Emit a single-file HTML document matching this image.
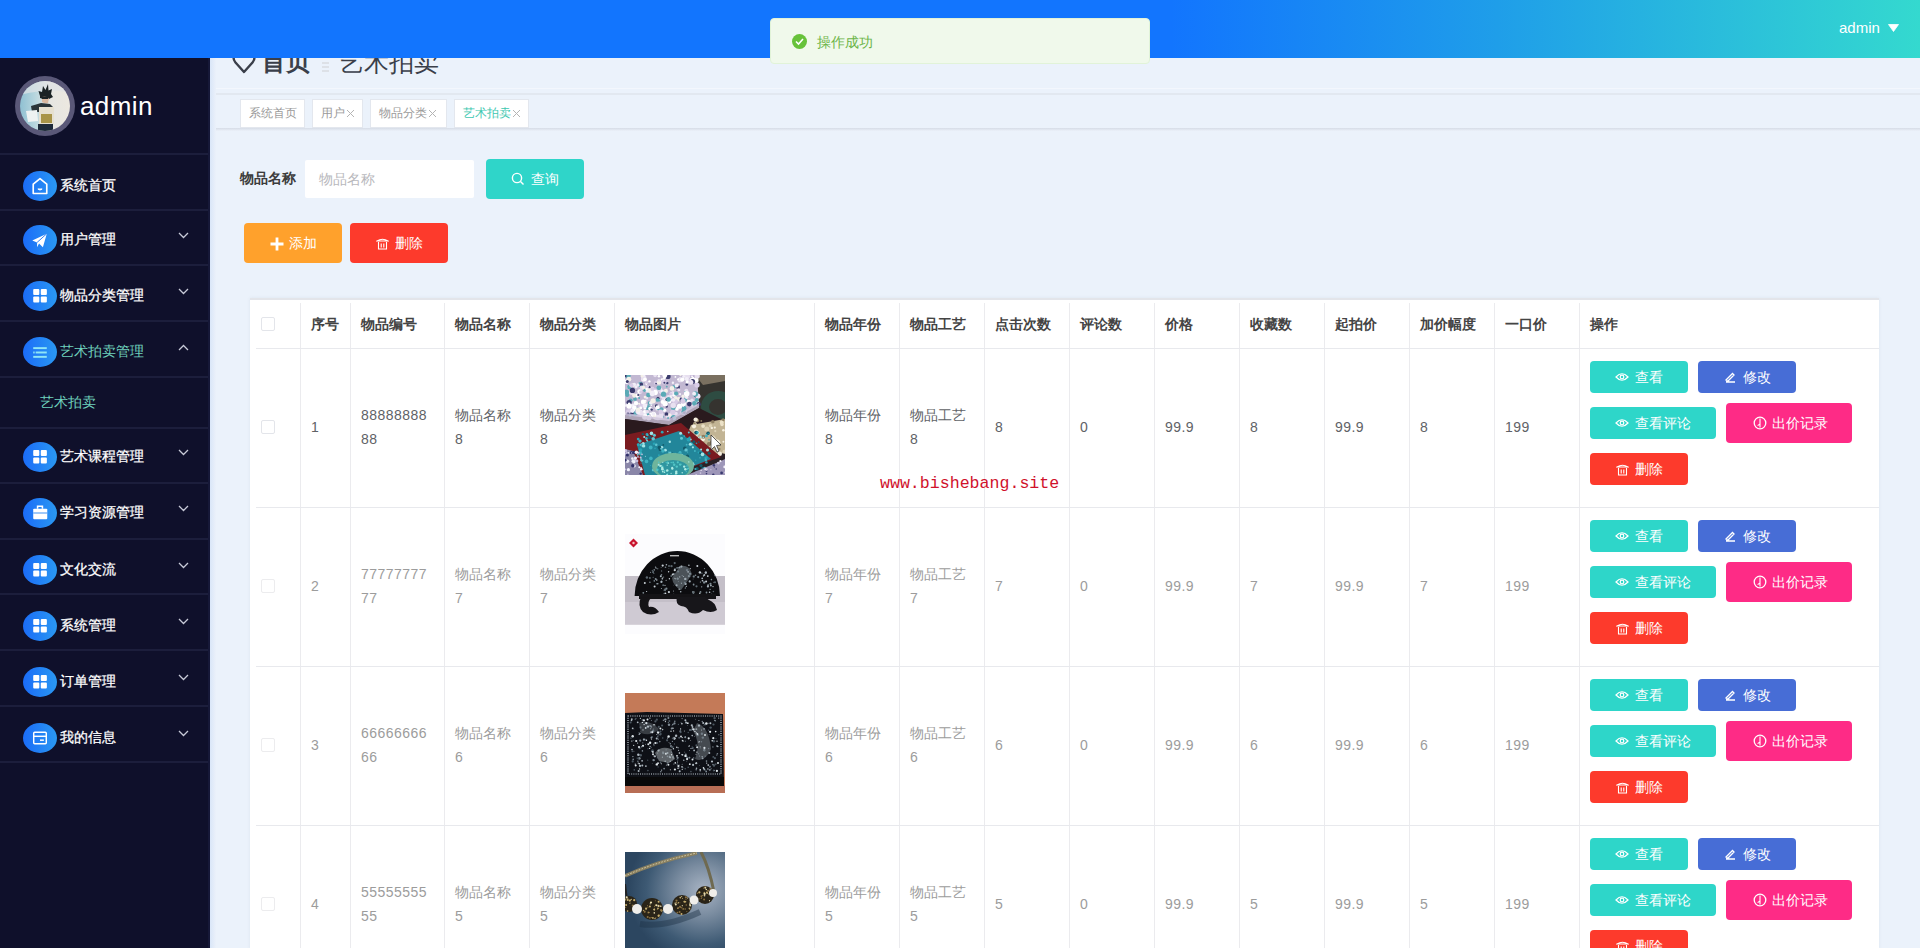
<!DOCTYPE html><html><head><meta charset="utf-8"><style>
*{box-sizing:border-box;margin:0;padding:0}
html,body{width:1920px;height:948px;overflow:hidden;background:#ebf2fb;font-family:"Liberation Sans",sans-serif;position:relative}
.a{position:absolute}
#hdr{left:0;top:0;width:1920px;height:58px;background:linear-gradient(90deg,#1275fe 0%,#1275fe 61%,#1f9ee9 78%,#34d9cf 100%);z-index:5}
#side{left:0;top:58px;width:210px;height:890px;background:#0f102b;z-index:3;overflow:hidden}
.hl{position:absolute;left:0;width:210px;height:2px;background:#1c1e3c}
.ic{position:absolute;left:23px;width:34px;height:30px;border-radius:50%;background:linear-gradient(90deg,#1b6cf8,#2a98f2)}
.ic svg{position:absolute;left:0;top:0}
.mt{position:absolute;left:60px;font-size:14px;color:#fff;line-height:16px;white-space:nowrap;-webkit-text-stroke:0.25px currentColor}
.chev{position:absolute;left:178px}
.tag{position:absolute;top:99px;height:29px;background:#fff;border:1px solid #e3e7ee;font-size:12px;color:#999;line-height:27px;padding-left:8px;white-space:nowrap}
.btn{position:absolute;border-radius:4px;color:#fff;font-size:14px;line-height:16px;text-align:center;white-space:nowrap}
.btn svg{display:inline-block;vertical-align:-2px;margin-right:6px}
.vl{position:absolute;width:1px;background:#ebebee}
.hz{position:absolute;height:1px;background:#ebeef5}
.th{position:absolute;top:316px;font-size:14px;font-weight:bold;color:#444;line-height:16px;white-space:nowrap}
.td{position:absolute;font-size:14px;line-height:24px;color:#606266;white-space:nowrap}
.fd{color:#9c9c9c}
.n{letter-spacing:.45px}
.cb{position:absolute;left:261px;width:14px;height:14px;border:1px solid #e3e5ea;border-radius:2px;background:#fff}
</style></head><body>
<div id="hdr" class="a">
<div class="a" style="left:1839px;top:19px;font-size:15px;color:#fff;line-height:18px">admin</div>
<svg class="a" style="left:1888px;top:24px" width="11" height="8" viewBox="0 0 11 8"><path d="M0.5 0.5H10.5L5.5 7.5Z" fill="#fff" stroke="#fff" stroke-width="0.8" stroke-linejoin="round"/></svg>
</div>
<div id="side" class="a">
<div class="a" style="left:15px;top:18px;width:60px;height:60px;border-radius:50%;background:#5a5878;">
<div class="a" style="left:5px;top:5px;width:50px;height:50px;border-radius:50%;overflow:hidden;background:linear-gradient(90deg,#8fc0d2 0%,#b8d6de 30%,#e6e6e2 60%,#ece8e0 100%)">
<svg width="50" height="50" viewBox="0 0 50 50" style="filter:blur(0.35px)">
<path d="M0 0H50V12Q30 6 0 14Z" fill="#dfe3e6" opacity="0.7"/>
<path d="M20 15 L18.5 10 L22 11 L23 5 L25.5 9 L28 3 L28.5 9.5 L32 8 L31 13 L33 16 L29 18 L23 18 L20 17Z" fill="#1a2224"/>
<path d="M22 16 Q26 15 29 17 L28 22 Q25 23 22 21Z" fill="#d9b8a0"/>
<path d="M22 16 L29 16 L28 18 L22 18Z" fill="#1a2224"/>
<path d="M11 25 L21 22 L30 23 L34 27 L34 31 L12 31Z" fill="#2a3438"/>
<path d="M19 26 L34 26 L34 43 L19 43Z" fill="#e6e0d0"/>
<path d="M21 33 L32 33 L32 42 L21 42Z" fill="#a89448"/>
<path d="M6 30 L17 29 L18 40 L8 41Z" fill="#eef2f2"/>
<path d="M18 43 L33 43 L33 50 L18 50Z" fill="#1e2a3a"/>
</svg></div></div>
<div class="a" style="left:80px;top:33px;font-size:26px;letter-spacing:0.4px;color:#fff;line-height:30px">admin</div>
<div class="hl" style="top:95px"></div>
<div class="hl" style="top:151px"></div>
<div class="hl" style="top:206px"></div>
<div class="hl" style="top:262px"></div>
<div class="hl" style="top:318px"></div>
<div class="hl" style="top:369px"></div>
<div class="hl" style="top:424px"></div>
<div class="hl" style="top:480px"></div>
<div class="hl" style="top:535px"></div>
<div class="hl" style="top:591px"></div>
<div class="hl" style="top:647px"></div>
<div class="hl" style="top:703px"></div>
<div class="ic" style="top:113px"><svg width="34" height="30" viewBox="0 0 34 31"><path d="M10 13.5 L17 7.8 L24 13.5 V23.2 H10Z" fill="none" stroke="#fff" stroke-width="1.7" stroke-linejoin="round"/><path d="M14.8 18.6 Q17 20.8 19.2 18.6Z" fill="#fff" stroke="#fff" stroke-width="1"/></svg></div>
<div class="mt" style="top:119px;color:#fff">系统首页</div>
<div class="ic" style="top:167px"><svg width="34" height="30" viewBox="0 0 34 31"><path d="M9 16 L24 9 L20 23 L16 19 L14 23 L14 18Z" fill="#fff"/><path d="M14 18 L24 9" stroke="#2a7cf3" stroke-width="1"/></svg></div>
<div class="mt" style="top:173px;color:#fff">用户管理</div>
<svg class="chev" style="top:174px" width="11" height="7" viewBox="0 0 11 7"><path d="M1 1 L5.5 5.5 L10 1" fill="none" stroke="#c8cad8" stroke-width="1.3"/></svg>
<div class="ic" style="top:223px"><svg width="34" height="30" viewBox="0 0 34 31"><rect x="10" y="8.2" width="6.3" height="6.3" rx="1" fill="#fff"/><rect x="17.8" y="8.2" width="6.3" height="6.3" rx="1" fill="#fff"/><rect x="10" y="16" width="6.3" height="6.3" rx="1" fill="#fff"/><rect x="17.8" y="16" width="6.3" height="6.3" rx="1" fill="#fff"/></svg></div>
<div class="mt" style="top:229px;color:#fff">物品分类管理</div>
<svg class="chev" style="top:230px" width="11" height="7" viewBox="0 0 11 7"><path d="M1 1 L5.5 5.5 L10 1" fill="none" stroke="#c8cad8" stroke-width="1.3"/></svg>
<div class="ic" style="top:279px"><svg width="34" height="30" viewBox="0 0 34 31"><rect x="10" y="10.5" width="14" height="2" fill="#8fe6f6"/><rect x="10" y="15" width="1.5" height="2" fill="#8fe6f6"/><rect x="12.5" y="15" width="11.5" height="2" fill="#8fe6f6"/><rect x="10" y="19.5" width="14" height="2" fill="#8fe6f6"/></svg></div>
<div class="mt" style="top:285px;color:#6fd3bd;-webkit-text-stroke:0">艺术拍卖管理</div>
<svg class="chev" style="top:286px" width="11" height="7" viewBox="0 0 11 7"><path d="M1 6 L5.5 1.5 L10 6" fill="none" stroke="#c8cad8" stroke-width="1.3"/></svg>
<div class="ic" style="top:384px"><svg width="34" height="30" viewBox="0 0 34 31"><rect x="10" y="8.2" width="6.3" height="6.3" rx="1" fill="#fff"/><rect x="17.8" y="8.2" width="6.3" height="6.3" rx="1" fill="#fff"/><rect x="10" y="16" width="6.3" height="6.3" rx="1" fill="#fff"/><rect x="17.8" y="16" width="6.3" height="6.3" rx="1" fill="#fff"/></svg></div>
<div class="mt" style="top:390px;color:#fff">艺术课程管理</div>
<svg class="chev" style="top:391px" width="11" height="7" viewBox="0 0 11 7"><path d="M1 1 L5.5 5.5 L10 1" fill="none" stroke="#c8cad8" stroke-width="1.3"/></svg>
<div class="ic" style="top:440px"><svg width="34" height="30" viewBox="0 0 34 31"><path d="M14.5 11V8.5H19.5V11" fill="none" stroke="#fff" stroke-width="1.6"/><rect x="10" y="11" width="14.5" height="11" rx="1" fill="#fff"/><rect x="10" y="15" width="14.5" height="1" fill="#3a8ef0"/></svg></div>
<div class="mt" style="top:446px;color:#fff">学习资源管理</div>
<svg class="chev" style="top:447px" width="11" height="7" viewBox="0 0 11 7"><path d="M1 1 L5.5 5.5 L10 1" fill="none" stroke="#c8cad8" stroke-width="1.3"/></svg>
<div class="ic" style="top:497px"><svg width="34" height="30" viewBox="0 0 34 31"><rect x="10" y="8.2" width="6.3" height="6.3" rx="1" fill="#fff"/><rect x="17.8" y="8.2" width="6.3" height="6.3" rx="1" fill="#fff"/><rect x="10" y="16" width="6.3" height="6.3" rx="1" fill="#fff"/><rect x="17.8" y="16" width="6.3" height="6.3" rx="1" fill="#fff"/></svg></div>
<div class="mt" style="top:503px;color:#fff">文化交流</div>
<svg class="chev" style="top:504px" width="11" height="7" viewBox="0 0 11 7"><path d="M1 1 L5.5 5.5 L10 1" fill="none" stroke="#c8cad8" stroke-width="1.3"/></svg>
<div class="ic" style="top:553px"><svg width="34" height="30" viewBox="0 0 34 31"><rect x="10" y="8.2" width="6.3" height="6.3" rx="1" fill="#fff"/><rect x="17.8" y="8.2" width="6.3" height="6.3" rx="1" fill="#fff"/><rect x="10" y="16" width="6.3" height="6.3" rx="1" fill="#fff"/><rect x="17.8" y="16" width="6.3" height="6.3" rx="1" fill="#fff"/></svg></div>
<div class="mt" style="top:559px;color:#fff">系统管理</div>
<svg class="chev" style="top:560px" width="11" height="7" viewBox="0 0 11 7"><path d="M1 1 L5.5 5.5 L10 1" fill="none" stroke="#c8cad8" stroke-width="1.3"/></svg>
<div class="ic" style="top:609px"><svg width="34" height="30" viewBox="0 0 34 31"><rect x="10" y="8.2" width="6.3" height="6.3" rx="1" fill="#fff"/><rect x="17.8" y="8.2" width="6.3" height="6.3" rx="1" fill="#fff"/><rect x="10" y="16" width="6.3" height="6.3" rx="1" fill="#fff"/><rect x="17.8" y="16" width="6.3" height="6.3" rx="1" fill="#fff"/></svg></div>
<div class="mt" style="top:615px;color:#fff">订单管理</div>
<svg class="chev" style="top:616px" width="11" height="7" viewBox="0 0 11 7"><path d="M1 1 L5.5 5.5 L10 1" fill="none" stroke="#c8cad8" stroke-width="1.3"/></svg>
<div class="ic" style="top:665px"><svg width="34" height="30" viewBox="0 0 34 31"><rect x="10.5" y="9.5" width="13" height="12" rx="1" fill="none" stroke="#fff" stroke-width="1.5"/><rect x="10.5" y="13" width="13" height="1.5" fill="#fff"/><rect x="17" y="17" width="4" height="1.5" fill="#fff"/></svg></div>
<div class="mt" style="top:671px;color:#fff">我的信息</div>
<svg class="chev" style="top:672px" width="11" height="7" viewBox="0 0 11 7"><path d="M1 1 L5.5 5.5 L10 1" fill="none" stroke="#c8cad8" stroke-width="1.3"/></svg>
<div class="mt" style="left:40px;top:336px;color:#6fd3bd;-webkit-text-stroke:0">艺术拍卖</div>
<div class="a" style="left:208px;top:0;width:2px;height:890px;background:#161838"></div>
</div>
<div class="a" style="left:210px;top:58px;width:6px;height:890px;background:linear-gradient(90deg,#d9e6f8,#ebf1fa)"></div>
<svg class="a" style="left:232px;top:50px" width="24" height="24" viewBox="0 0 24 24"><path d="M12 22 L3.5 12.5 Q1.5 10 1.5 7.5 Q1.5 2.5 6.5 2.5 Q10 2.5 12 6 Q14 2.5 17.5 2.5 Q22.5 2.5 22.5 7.5 Q22.5 10 20.5 12.5Z" fill="none" stroke="#3a3f4a" stroke-width="2.4" stroke-linejoin="round"/></svg>
<div class="a" style="left:261px;top:46px;font-size:25px;font-weight:bold;color:#3a3f4a;line-height:30px">首页</div>
<div class="a" style="left:322px;top:62px;width:7px;height:2px;background:#dde1e7"></div><div class="a" style="left:322px;top:66px;width:7px;height:2px;background:#dde1e7"></div><div class="a" style="left:322px;top:70px;width:7px;height:2px;background:#dde1e7"></div>
<div class="a" style="left:339px;top:47px;font-size:25px;color:#3a3f4a;line-height:30px">艺术拍卖</div>
<div class="a" style="left:216px;top:88px;width:1704px;height:1px;background:#f3f7fd"></div>
<div class="a" style="left:216px;top:93px;width:1704px;height:2px;background:#e2e8f0"></div>
<div class="a" style="left:216px;top:128px;width:1704px;height:3px;background:linear-gradient(#d6dce6,#ebf1fa)"></div>
<div class="tag" style="left:240px;width:65px;color:#9a9a9a">系统首页</div>
<div class="tag" style="left:312px;width:51px;color:#9a9a9a">用户<svg style="vertical-align:-1px;margin-left:1px" width="9" height="9" viewBox="0 0 9 9"><path d="M1 1L8 8M8 1L1 8" stroke="#b4b4b4" stroke-width="1"/></svg></div>
<div class="tag" style="left:370px;width:77px;color:#9a9a9a">物品分类<svg style="vertical-align:-1px;margin-left:1px" width="9" height="9" viewBox="0 0 9 9"><path d="M1 1L8 8M8 1L1 8" stroke="#b4b4b4" stroke-width="1"/></svg></div>
<div class="tag" style="left:454px;width:75px;color:#3dc7b0">艺术拍卖<svg style="vertical-align:-1px;margin-left:1px" width="9" height="9" viewBox="0 0 9 9"><path d="M1 1L8 8M8 1L1 8" stroke="#b4b4b4" stroke-width="1"/></svg></div>
<div class="a" style="left:240px;top:170px;font-size:14px;font-weight:bold;color:#3c3c3c;line-height:16px">物品名称</div>
<div class="a" style="left:305px;top:160px;width:169px;height:38px;background:#fff;border-radius:2px"></div>
<div class="a" style="left:319px;top:171px;font-size:14px;color:#b8b8bc;line-height:16px">物品名称</div>
<div class="btn" style="left:486px;top:159px;width:98px;height:40px;background:#2fd5c9;padding-top:12px"><svg width="14" height="14" viewBox="0 0 14 14"><circle cx="6" cy="6" r="4.6" fill="none" stroke="#fff" stroke-width="1.4"/><path d="M9.5 9.5L12.5 12.5" stroke="#fff" stroke-width="1.4"/></svg>查询</div>
<div class="btn" style="left:244px;top:223px;width:98px;height:40px;background:#ffa12c;padding-top:12px"><svg style="margin-right:5px;vertical-align:-2.5px" width="14" height="14" viewBox="0 0 14 14"><path d="M7 0.5V13.5M0.5 7H13.5" stroke="#fff" stroke-width="2.8"/></svg>添加</div>
<div class="btn" style="left:350px;top:223px;width:98px;height:40px;background:#fd3a2c;padding-top:12px"><svg width="13" height="13" viewBox="0 0 13 13"><path d="M1 4Q6.5 0.5 12 4Z" fill="none" stroke="#fff" stroke-width="1.1"/><path d="M2.5 5V12H10.5V5M5.2 6.5V10.5M7.8 6.5V10.5" fill="none" stroke="#fff" stroke-width="1.1"/></svg>删除</div>
<div class="a" style="left:250px;top:298px;width:1629px;height:651px;background:#fff;border-top:2px solid #e3e5ea;box-shadow:0 0 3px rgba(120,130,150,0.12)"></div>
<div class="vl" style="left:300px;top:303px;height:650px"></div>
<div class="vl" style="left:350px;top:303px;height:650px"></div>
<div class="vl" style="left:444px;top:303px;height:650px"></div>
<div class="vl" style="left:529px;top:303px;height:650px"></div>
<div class="vl" style="left:614px;top:303px;height:650px"></div>
<div class="vl" style="left:814px;top:303px;height:650px"></div>
<div class="vl" style="left:899px;top:303px;height:650px"></div>
<div class="vl" style="left:984px;top:303px;height:650px"></div>
<div class="vl" style="left:1069px;top:303px;height:650px"></div>
<div class="vl" style="left:1154px;top:303px;height:650px"></div>
<div class="vl" style="left:1239px;top:303px;height:650px"></div>
<div class="vl" style="left:1324px;top:303px;height:650px"></div>
<div class="vl" style="left:1409px;top:303px;height:650px"></div>
<div class="vl" style="left:1494px;top:303px;height:650px"></div>
<div class="vl" style="left:1579px;top:303px;height:650px"></div>
<div class="hz" style="left:256px;top:348px;width:1623px;background:#e8e9ed"></div>
<div class="hz" style="left:256px;top:507px;width:1623px;background:#e8e9ed"></div>
<div class="hz" style="left:256px;top:666px;width:1623px;background:#e8e9ed"></div>
<div class="hz" style="left:256px;top:825px;width:1623px;background:#e8e9ed"></div>
<div class="cb" style="top:317px"></div>
<div class="th" style="left:311px">序号</div>
<div class="th" style="left:361px">物品编号</div>
<div class="th" style="left:455px">物品名称</div>
<div class="th" style="left:540px">物品分类</div>
<div class="th" style="left:625px">物品图片</div>
<div class="th" style="left:825px">物品年份</div>
<div class="th" style="left:910px">物品工艺</div>
<div class="th" style="left:995px">点击次数</div>
<div class="th" style="left:1080px">评论数</div>
<div class="th" style="left:1165px">价格</div>
<div class="th" style="left:1250px">收藏数</div>
<div class="th" style="left:1335px">起拍价</div>
<div class="th" style="left:1420px">加价幅度</div>
<div class="th" style="left:1505px">一口价</div>
<div class="th" style="left:1590px">操作</div>
<div class="cb" style="top:420px"></div>
<div class="td n" style="left:311px;top:415px">1</div>
<div class="td n" style="left:361px;top:403px">88888888<br>88</div>
<div class="td" style="left:455px;top:403px">物品名称<br>8</div>
<div class="td" style="left:540px;top:403px">物品分类<br>8</div>
<div class="td" style="left:825px;top:403px">物品年份<br>8</div>
<div class="td" style="left:910px;top:403px">物品工艺<br>8</div>
<div class="td n" style="left:995px;top:415px">8</div>
<div class="td n" style="left:1080px;top:415px">0</div>
<div class="td n" style="left:1165px;top:415px">99.9</div>
<div class="td n" style="left:1250px;top:415px">8</div>
<div class="td n" style="left:1335px;top:415px">99.9</div>
<div class="td n" style="left:1420px;top:415px">8</div>
<div class="td n" style="left:1505px;top:415px">199</div>
<div class="a" style="left:625px;top:375px;width:100px;height:100px;overflow:hidden"><svg width="100" height="100" viewBox="0 0 100 100"><rect width="100" height="100" fill="#2b2126"/><rect x="70" y="0" width="30" height="50" fill="#35332f"/><path d="M70 0H100V6L78 10Z" fill="#7a7060"/><ellipse cx="93" cy="32" rx="13" ry="12" fill="none" stroke="#2e4c42" stroke-width="8"/><path d="M0 0H72L74 30L44 46L0 40Z" fill="#c2b8d2"/><circle cx="9.9" cy="39.0" r="2.3" fill="#5aaab6"/><circle cx="8.7" cy="35.0" r="1.7" fill="#e8e0f0"/><circle cx="58.4" cy="4.3" r="0.8" fill="#e8e0f0"/><circle cx="32.0" cy="35.1" r="0.7" fill="#f4f0e8"/><circle cx="19.7" cy="36.9" r="1.9" fill="#ffffff"/><circle cx="66.7" cy="1.4" r="0.8" fill="#f2eef8"/><circle cx="69.5" cy="17.5" r="1.2" fill="#e8e0f0"/><circle cx="53.7" cy="24.3" r="2.3" fill="#f4f0e8"/><circle cx="40.9" cy="15.9" r="2.1" fill="#f4f0e8"/><circle cx="30.8" cy="42.1" r="2.6" fill="#ffffff"/><circle cx="63.6" cy="5.6" r="1.4" fill="#e8e0f0"/><circle cx="37.6" cy="41.9" r="1.1" fill="#5aaab6"/><circle cx="43.5" cy="40.6" r="2.5" fill="#e8e0f0"/><circle cx="43.6" cy="1.6" r="1.2" fill="#e8e0f0"/><circle cx="30.7" cy="8.0" r="1.9" fill="#d8cce6"/><circle cx="6.4" cy="30.5" r="0.9" fill="#ffffff"/><circle cx="38.5" cy="18.1" r="1.7" fill="#f2eef8"/><circle cx="34.7" cy="14.2" r="2.5" fill="#e8e0f0"/><circle cx="47.9" cy="7.8" r="1.2" fill="#f2eef8"/><circle cx="57.0" cy="24.8" r="2.5" fill="#3a3a6c"/><circle cx="29.9" cy="15.8" r="2.5" fill="#d8cce6"/><circle cx="34.0" cy="12.4" r="1.9" fill="#f2eef8"/><circle cx="28.4" cy="39.4" r="2.7" fill="#ffffff"/><circle cx="38.4" cy="25.8" r="1.6" fill="#f2eef8"/><circle cx="35.6" cy="16.8" r="1.9" fill="#e8e0f0"/><circle cx="35.9" cy="16.4" r="1.4" fill="#d8cce6"/><circle cx="33.9" cy="1.3" r="1.2" fill="#ffffff"/><circle cx="40.8" cy="8.3" r="0.9" fill="#5aaab6"/><circle cx="5.2" cy="39.9" r="1.7" fill="#5aaab6"/><circle cx="18.5" cy="5.0" r="2.0" fill="#d8cce6"/><circle cx="21.5" cy="7.7" r="1.2" fill="#ffffff"/><circle cx="48.6" cy="29.8" r="1.3" fill="#d8cce6"/><circle cx="36.7" cy="5.3" r="1.4" fill="#d8cce6"/><circle cx="31.1" cy="8.6" r="0.9" fill="#3a3a6c"/><circle cx="71.5" cy="19.9" r="2.7" fill="#3a3a6c"/><circle cx="1.3" cy="6.7" r="2.2" fill="#ffffff"/><circle cx="33.0" cy="23.3" r="1.6" fill="#3a3a6c"/><circle cx="72.3" cy="29.0" r="2.2" fill="#f4f0e8"/><circle cx="16.5" cy="29.8" r="1.5" fill="#d8cce6"/><circle cx="48.8" cy="19.6" r="2.2" fill="#ffffff"/><circle cx="22.7" cy="39.5" r="1.4" fill="#5aaab6"/><circle cx="55.0" cy="19.1" r="1.2" fill="#f2eef8"/><circle cx="41.5" cy="39.1" r="1.9" fill="#3a3a6c"/><circle cx="71.2" cy="26.2" r="1.1" fill="#f2eef8"/><circle cx="28.0" cy="16.0" r="1.1" fill="#e8e0f0"/><circle cx="43.8" cy="22.6" r="2.7" fill="#e8e0f0"/><circle cx="21.9" cy="23.0" r="1.4" fill="#e8e0f0"/><circle cx="66.6" cy="0.8" r="1.1" fill="#d8cce6"/><circle cx="60.0" cy="25.9" r="1.0" fill="#e8e0f0"/><circle cx="15.8" cy="31.0" r="2.5" fill="#d8cce6"/><circle cx="39.5" cy="35.3" r="1.8" fill="#ffffff"/><circle cx="53.7" cy="3.9" r="1.1" fill="#3a3a6c"/><circle cx="19.8" cy="15.3" r="1.8" fill="#5aaab6"/><circle cx="27.2" cy="15.7" r="1.3" fill="#f4f0e8"/><circle cx="10.0" cy="25.4" r="0.9" fill="#f2eef8"/><circle cx="30.1" cy="17.5" r="2.8" fill="#ffffff"/><circle cx="61.3" cy="15.7" r="2.0" fill="#e8e0f0"/><circle cx="5.7" cy="25.3" r="1.9" fill="#5aaab6"/><circle cx="27.0" cy="13.6" r="1.8" fill="#ffffff"/><circle cx="33.9" cy="12.8" r="2.4" fill="#5aaab6"/><circle cx="0.9" cy="30.8" r="0.9" fill="#ffffff"/><circle cx="61.1" cy="36.3" r="1.1" fill="#e8e0f0"/><circle cx="12.0" cy="20.7" r="2.1" fill="#ffffff"/><circle cx="55.1" cy="4.7" r="2.6" fill="#e8e0f0"/><circle cx="59.7" cy="25.0" r="2.4" fill="#5aaab6"/><circle cx="52.7" cy="14.5" r="1.1" fill="#d8cce6"/><circle cx="2.9" cy="0.5" r="2.8" fill="#5aaab6"/><circle cx="53.8" cy="14.7" r="1.5" fill="#e8e0f0"/><circle cx="8.2" cy="9.9" r="2.0" fill="#f4f0e8"/><circle cx="49.0" cy="11.9" r="1.8" fill="#5aaab6"/><circle cx="14.7" cy="16.6" r="2.4" fill="#ffffff"/><circle cx="72.8" cy="20.6" r="2.1" fill="#d8cce6"/><circle cx="69.6" cy="18.0" r="1.3" fill="#d8cce6"/><circle cx="13.8" cy="36.5" r="1.9" fill="#5aaab6"/><circle cx="18.2" cy="4.6" r="2.0" fill="#ffffff"/><circle cx="18.1" cy="0.9" r="1.2" fill="#ffffff"/><circle cx="19.8" cy="39.9" r="2.2" fill="#f2eef8"/><circle cx="47.0" cy="13.4" r="2.4" fill="#f4f0e8"/><circle cx="34.7" cy="39.5" r="0.9" fill="#d8cce6"/><circle cx="12.8" cy="35.7" r="2.8" fill="#d8cce6"/><circle cx="22.6" cy="32.6" r="2.5" fill="#5aaab6"/><circle cx="9.3" cy="9.5" r="1.8" fill="#f2eef8"/><circle cx="57.7" cy="37.8" r="2.0" fill="#3a3a6c"/><circle cx="13.2" cy="19.9" r="1.0" fill="#3a3a6c"/><circle cx="18.7" cy="3.0" r="2.7" fill="#e8e0f0"/><circle cx="40.6" cy="24.9" r="2.5" fill="#f4f0e8"/><circle cx="0.8" cy="38.5" r="1.1" fill="#f4f0e8"/><circle cx="1.8" cy="29.7" r="1.6" fill="#f2eef8"/><circle cx="4.6" cy="16.3" r="1.0" fill="#ffffff"/><circle cx="20.5" cy="25.9" r="1.1" fill="#ffffff"/><circle cx="17.3" cy="0.3" r="1.8" fill="#f4f0e8"/><circle cx="68.8" cy="29.4" r="1.2" fill="#d8cce6"/><circle cx="36.6" cy="22.0" r="1.2" fill="#e8e0f0"/><circle cx="24.9" cy="28.1" r="2.2" fill="#5aaab6"/><circle cx="72.0" cy="10.1" r="2.6" fill="#d8cce6"/><circle cx="11.8" cy="35.2" r="2.6" fill="#5aaab6"/><circle cx="22.1" cy="13.8" r="1.9" fill="#ffffff"/><circle cx="51.9" cy="33.9" r="1.9" fill="#ffffff"/><circle cx="42.3" cy="8.1" r="1.2" fill="#3a3a6c"/><circle cx="57.9" cy="22.8" r="1.5" fill="#d8cce6"/><circle cx="28.4" cy="38.9" r="1.8" fill="#f2eef8"/><circle cx="38.8" cy="4.2" r="1.2" fill="#ffffff"/><circle cx="19.8" cy="42.0" r="2.7" fill="#ffffff"/><circle cx="71.7" cy="28.4" r="2.7" fill="#ffffff"/><circle cx="32.9" cy="42.5" r="2.7" fill="#e8e0f0"/><circle cx="29.4" cy="41.9" r="1.6" fill="#f4f0e8"/><circle cx="71.0" cy="5.5" r="2.0" fill="#e8e0f0"/><circle cx="67.3" cy="30.4" r="1.3" fill="#e8e0f0"/><circle cx="55.5" cy="0.2" r="1.1" fill="#f4f0e8"/><circle cx="42.9" cy="1.4" r="2.7" fill="#3a3a6c"/><circle cx="61.8" cy="9.5" r="1.3" fill="#3a3a6c"/><circle cx="20.2" cy="26.9" r="1.2" fill="#f4f0e8"/><circle cx="58.5" cy="37.2" r="2.7" fill="#d8cce6"/><circle cx="36.3" cy="39.4" r="2.3" fill="#e8e0f0"/><circle cx="15.2" cy="37.3" r="2.6" fill="#f2eef8"/><circle cx="8.7" cy="34.4" r="1.8" fill="#ffffff"/><circle cx="5.6" cy="17.2" r="2.4" fill="#e8e0f0"/><circle cx="37.2" cy="16.4" r="1.8" fill="#f2eef8"/><circle cx="9.2" cy="33.0" r="1.4" fill="#e8e0f0"/><circle cx="25.1" cy="33.6" r="1.9" fill="#ffffff"/><circle cx="47.9" cy="17.4" r="1.1" fill="#f2eef8"/><circle cx="73.6" cy="29.2" r="2.2" fill="#3a3a6c"/><circle cx="73.0" cy="21.2" r="2.5" fill="#e8e0f0"/><circle cx="33.3" cy="30.8" r="1.1" fill="#f2eef8"/><circle cx="50.2" cy="26.6" r="2.7" fill="#d8cce6"/><circle cx="63.7" cy="26.9" r="2.2" fill="#ffffff"/><circle cx="36.5" cy="34.3" r="2.0" fill="#5aaab6"/><circle cx="46.6" cy="18.7" r="2.0" fill="#e8e0f0"/><circle cx="56.8" cy="37.5" r="2.0" fill="#d8cce6"/><circle cx="30.4" cy="31.5" r="1.3" fill="#f4f0e8"/><circle cx="61.6" cy="22.3" r="1.7" fill="#f2eef8"/><circle cx="20.0" cy="4.5" r="1.9" fill="#ffffff"/><circle cx="26.3" cy="30.2" r="0.7" fill="#ffffff"/><circle cx="51.1" cy="18.5" r="2.1" fill="#5aaab6"/><circle cx="15.5" cy="9.6" r="2.6" fill="#5aaab6"/><circle cx="5.1" cy="32.2" r="2.6" fill="#d8cce6"/><circle cx="34.6" cy="25.7" r="0.8" fill="#5aaab6"/><circle cx="48.3" cy="32.8" r="2.4" fill="#5aaab6"/><circle cx="26.3" cy="34.0" r="1.5" fill="#e8e0f0"/><circle cx="12.8" cy="36.3" r="2.5" fill="#d8cce6"/><circle cx="53.0" cy="11.9" r="2.0" fill="#3a3a6c"/><circle cx="62.4" cy="1.4" r="2.6" fill="#e8e0f0"/><circle cx="23.4" cy="19.9" r="2.3" fill="#5aaab6"/><circle cx="14.1" cy="28.8" r="1.0" fill="#f4f0e8"/><circle cx="43.0" cy="42.9" r="1.0" fill="#5aaab6"/><circle cx="34.0" cy="7.5" r="2.3" fill="#f4f0e8"/><circle cx="26.7" cy="34.6" r="1.2" fill="#3a3a6c"/><circle cx="53.2" cy="14.1" r="0.9" fill="#e8e0f0"/><circle cx="23.8" cy="42.7" r="2.7" fill="#f2eef8"/><circle cx="4.1" cy="27.5" r="2.6" fill="#3a3a6c"/><circle cx="50.6" cy="22.7" r="1.8" fill="#f4f0e8"/><circle cx="25.3" cy="38.5" r="0.9" fill="#ffffff"/><circle cx="7.0" cy="18.4" r="1.7" fill="#e8e0f0"/><circle cx="17.4" cy="13.0" r="1.8" fill="#e8e0f0"/><circle cx="15.7" cy="32.9" r="1.4" fill="#ffffff"/><circle cx="3.4" cy="36.7" r="2.5" fill="#d8cce6"/><circle cx="21.3" cy="9.0" r="1.0" fill="#ffffff"/><circle cx="58.7" cy="1.4" r="1.5" fill="#f2eef8"/><circle cx="41.8" cy="11.7" r="0.9" fill="#5aaab6"/><circle cx="67.1" cy="1.6" r="0.8" fill="#ffffff"/><circle cx="3.2" cy="12.6" r="0.9" fill="#ffffff"/><circle cx="14.1" cy="23.0" r="1.0" fill="#5aaab6"/><circle cx="50.8" cy="38.9" r="2.1" fill="#e8e0f0"/><circle cx="24.4" cy="12.3" r="1.2" fill="#3a3a6c"/><circle cx="18.2" cy="27.0" r="2.4" fill="#ffffff"/><circle cx="25.9" cy="27.8" r="1.9" fill="#f2eef8"/><circle cx="67.0" cy="25.2" r="1.8" fill="#e8e0f0"/><circle cx="68.1" cy="3.2" r="1.3" fill="#ffffff"/><circle cx="3.9" cy="4.2" r="2.4" fill="#f4f0e8"/><circle cx="37.1" cy="4.6" r="1.4" fill="#ffffff"/><circle cx="39.3" cy="20.4" r="1.0" fill="#e8e0f0"/><circle cx="33.0" cy="33.9" r="1.3" fill="#5aaab6"/><circle cx="59.2" cy="3.9" r="0.8" fill="#e8e0f0"/><circle cx="4.3" cy="12.0" r="2.2" fill="#5aaab6"/><circle cx="58.8" cy="37.1" r="2.5" fill="#5aaab6"/><circle cx="7.0" cy="38.7" r="1.8" fill="#3a3a6c"/><circle cx="24.4" cy="15.6" r="2.3" fill="#f4f0e8"/><circle cx="7.7" cy="30.0" r="1.6" fill="#f2eef8"/><circle cx="21.6" cy="7.2" r="1.5" fill="#d8cce6"/><circle cx="7.2" cy="15.9" r="1.9" fill="#f2eef8"/><circle cx="22.2" cy="36.8" r="1.8" fill="#e8e0f0"/><circle cx="22.1" cy="16.2" r="1.4" fill="#f2eef8"/><circle cx="38.9" cy="6.8" r="2.6" fill="#d8cce6"/><circle cx="58.1" cy="26.4" r="1.6" fill="#5aaab6"/><circle cx="35.5" cy="42.0" r="2.6" fill="#e8e0f0"/><circle cx="10.0" cy="24.1" r="1.9" fill="#5aaab6"/><circle cx="58.0" cy="32.3" r="2.3" fill="#d8cce6"/><circle cx="27.4" cy="14.1" r="2.0" fill="#d8cce6"/><circle cx="39.4" cy="7.7" r="1.0" fill="#3a3a6c"/><circle cx="41.6" cy="41.7" r="1.1" fill="#e8e0f0"/><circle cx="69.5" cy="28.5" r="2.4" fill="#5aaab6"/><circle cx="52.9" cy="9.4" r="0.8" fill="#ffffff"/><circle cx="16.1" cy="38.6" r="1.8" fill="#e8e0f0"/><circle cx="1.6" cy="16.9" r="2.5" fill="#5aaab6"/><circle cx="16.3" cy="9.2" r="1.7" fill="#3a3a6c"/><circle cx="31.5" cy="31.1" r="1.8" fill="#3a3a6c"/><circle cx="59.1" cy="33.4" r="2.4" fill="#5aaab6"/><circle cx="30.1" cy="0.4" r="1.8" fill="#e8e0f0"/><circle cx="38.1" cy="22.4" r="1.5" fill="#e8e0f0"/><circle cx="3.0" cy="39.2" r="1.7" fill="#3a3a6c"/><circle cx="47.5" cy="24.9" r="2.4" fill="#d8cce6"/><circle cx="71.8" cy="25.0" r="1.9" fill="#5aaab6"/><circle cx="38.9" cy="24.9" r="2.4" fill="#e8e0f0"/><circle cx="44.6" cy="26.7" r="1.7" fill="#ffffff"/><circle cx="37.5" cy="27.0" r="1.9" fill="#ffffff"/><circle cx="18.7" cy="0.4" r="1.6" fill="#f2eef8"/><circle cx="27.3" cy="18.5" r="2.7" fill="#f2eef8"/><circle cx="62.6" cy="17.6" r="1.7" fill="#d8cce6"/><circle cx="47.1" cy="39.2" r="2.3" fill="#e8e0f0"/><circle cx="33.8" cy="5.4" r="1.4" fill="#e8e0f0"/><circle cx="60.2" cy="16.9" r="1.0" fill="#5aaab6"/><circle cx="70.3" cy="19.0" r="2.7" fill="#5aaab6"/><circle cx="54.7" cy="31.8" r="1.6" fill="#f4f0e8"/><circle cx="15.9" cy="38.2" r="2.7" fill="#e8e0f0"/><circle cx="53.0" cy="4.2" r="1.0" fill="#ffffff"/><circle cx="17.0" cy="1.2" r="1.2" fill="#f4f0e8"/><circle cx="57.3" cy="4.6" r="2.1" fill="#ffffff"/><circle cx="61.7" cy="4.1" r="2.0" fill="#f2eef8"/><circle cx="40.7" cy="24.6" r="1.4" fill="#ffffff"/><circle cx="54.4" cy="31.2" r="2.5" fill="#ffffff"/><circle cx="13.2" cy="37.0" r="2.2" fill="#f2eef8"/><circle cx="58.2" cy="31.1" r="0.9" fill="#e8e0f0"/><circle cx="9.2" cy="20.6" r="2.1" fill="#f4f0e8"/><circle cx="67.0" cy="5.3" r="2.5" fill="#ffffff"/><circle cx="11.0" cy="28.2" r="2.2" fill="#ffffff"/><circle cx="38.5" cy="19.2" r="2.6" fill="#5aaab6"/><circle cx="64.3" cy="29.1" r="2.4" fill="#3a3a6c"/><circle cx="58.4" cy="28.7" r="2.5" fill="#ffffff"/><circle cx="48.6" cy="42.6" r="2.7" fill="#5aaab6"/><circle cx="4.2" cy="28.8" r="1.3" fill="#ffffff"/><circle cx="16.9" cy="12.6" r="2.2" fill="#e8e0f0"/><circle cx="11.0" cy="11.8" r="1.6" fill="#f2eef8"/><circle cx="39.4" cy="28.0" r="1.0" fill="#e8e0f0"/><circle cx="20.0" cy="22.1" r="1.3" fill="#f4f0e8"/><circle cx="15.9" cy="16.9" r="1.7" fill="#d8cce6"/><circle cx="13.0" cy="34.9" r="2.3" fill="#f4f0e8"/><circle cx="39.6" cy="2.7" r="1.4" fill="#ffffff"/><circle cx="47.7" cy="37.3" r="2.6" fill="#d8cce6"/><circle cx="46.1" cy="22.1" r="0.9" fill="#ffffff"/><circle cx="51.7" cy="10.4" r="2.0" fill="#f2eef8"/><circle cx="41.7" cy="31.5" r="1.2" fill="#3a3a6c"/><circle cx="37.2" cy="30.4" r="1.3" fill="#d8cce6"/><circle cx="0.3" cy="0.9" r="1.3" fill="#3a3a6c"/><circle cx="6.3" cy="10.3" r="2.1" fill="#d8cce6"/><circle cx="19.9" cy="33.1" r="1.5" fill="#ffffff"/><circle cx="24.4" cy="6.4" r="1.2" fill="#ffffff"/><circle cx="50.4" cy="1.9" r="0.9" fill="#ffffff"/><circle cx="22.2" cy="11.5" r="1.8" fill="#d8cce6"/><circle cx="2.3" cy="6.4" r="1.5" fill="#3a3a6c"/><circle cx="6.9" cy="15.1" r="0.7" fill="#d8cce6"/><circle cx="71.0" cy="5.2" r="2.6" fill="#ffffff"/><circle cx="44.9" cy="40.0" r="1.6" fill="#f4f0e8"/><circle cx="41.8" cy="24.6" r="1.5" fill="#3a3a6c"/><circle cx="46.8" cy="25.3" r="0.8" fill="#ffffff"/><circle cx="13.0" cy="9.9" r="1.6" fill="#f2eef8"/><circle cx="18.5" cy="12.5" r="1.8" fill="#f4f0e8"/><circle cx="9.3" cy="32.6" r="2.3" fill="#ffffff"/><circle cx="48.4" cy="25.0" r="1.8" fill="#f2eef8"/><circle cx="45.8" cy="20.5" r="1.0" fill="#ffffff"/><circle cx="67.6" cy="6.5" r="2.5" fill="#3a3a6c"/><circle cx="35.8" cy="36.8" r="2.3" fill="#d8cce6"/><circle cx="65.8" cy="7.3" r="2.5" fill="#e8e0f0"/><circle cx="61.7" cy="18.7" r="2.8" fill="#ffffff"/><circle cx="20.0" cy="30.7" r="2.4" fill="#f2eef8"/><circle cx="39.8" cy="0.4" r="2.4" fill="#ffffff"/><circle cx="28.1" cy="25.8" r="2.6" fill="#f4f0e8"/><circle cx="2.2" cy="19.9" r="2.1" fill="#5aaab6"/><circle cx="69.1" cy="18.8" r="2.0" fill="#f2eef8"/><circle cx="7.3" cy="35.8" r="2.1" fill="#f2eef8"/><circle cx="43.5" cy="24.4" r="2.3" fill="#5aaab6"/><circle cx="57.9" cy="26.1" r="2.7" fill="#d8cce6"/><circle cx="59.4" cy="37.7" r="1.2" fill="#3a3a6c"/><circle cx="64.5" cy="5.4" r="0.8" fill="#d8cce6"/><circle cx="31.3" cy="33.5" r="1.2" fill="#f2eef8"/><circle cx="45.7" cy="19.1" r="1.5" fill="#d8cce6"/><circle cx="32.6" cy="32.2" r="2.0" fill="#ffffff"/><circle cx="4.1" cy="31.0" r="2.6" fill="#ffffff"/><circle cx="40.2" cy="28.8" r="2.6" fill="#ffffff"/><circle cx="72.2" cy="1.0" r="2.6" fill="#e8e0f0"/><circle cx="46.7" cy="43.8" r="1.5" fill="#3a3a6c"/><circle cx="7.4" cy="15.4" r="2.7" fill="#3a3a6c"/><circle cx="58.1" cy="21.2" r="1.7" fill="#f4f0e8"/><circle cx="48.2" cy="30.5" r="2.7" fill="#e8e0f0"/><circle cx="32.6" cy="24.9" r="1.9" fill="#5aaab6"/><circle cx="62.1" cy="6.9" r="1.5" fill="#ffffff"/><path d="M0 38L44 44L74 28V33L44 50L0 44Z" fill="#cfc6dc" opacity="0.8"/><path d="M0 44L44 50L74 33L100 46V56L0 62Z" fill="#2a1a1e"/><path d="M66 50L100 44V78L84 80L62 60Z" fill="#c2b494"/><circle cx="92.8" cy="67.5" r="2.5" fill="#f6f0e0"/><circle cx="91.6" cy="68.0" r="2.2" fill="#ddd2b6"/><circle cx="97.0" cy="49.6" r="1.7" fill="#ece2c8"/><circle cx="98.1" cy="44.7" r="1.5" fill="#8d7d60"/><circle cx="83.4" cy="58.1" r="0.8" fill="#8d7d60"/><circle cx="99.4" cy="76.7" r="2.0" fill="#ddd2b6"/><circle cx="87.8" cy="46.7" r="1.8" fill="#8d7d60"/><circle cx="70.3" cy="65.1" r="1.7" fill="#f6f0e0"/><circle cx="72.5" cy="45.5" r="1.7" fill="#8d7d60"/><circle cx="89.2" cy="68.9" r="2.0" fill="#ece2c8"/><circle cx="72.9" cy="72.1" r="1.0" fill="#ece2c8"/><circle cx="77.9" cy="64.2" r="2.0" fill="#f6f0e0"/><circle cx="65.6" cy="62.7" r="2.2" fill="#ece2c8"/><circle cx="98.4" cy="55.2" r="1.3" fill="#f6f0e0"/><circle cx="70.0" cy="48.8" r="1.8" fill="#ddd2b6"/><circle cx="91.7" cy="66.9" r="2.6" fill="#f6f0e0"/><circle cx="83.9" cy="69.2" r="2.1" fill="#8d7d60"/><circle cx="81.8" cy="54.0" r="2.5" fill="#ddd2b6"/><circle cx="84.4" cy="74.4" r="2.2" fill="#ece2c8"/><circle cx="90.3" cy="56.1" r="1.1" fill="#ddd2b6"/><circle cx="73.1" cy="57.8" r="1.8" fill="#ece2c8"/><circle cx="69.4" cy="48.7" r="1.3" fill="#8d7d60"/><circle cx="66.5" cy="64.9" r="1.9" fill="#f6f0e0"/><circle cx="89.8" cy="52.6" r="1.1" fill="#f6f0e0"/><circle cx="78.1" cy="51.1" r="1.9" fill="#ece2c8"/><circle cx="69.5" cy="68.0" r="0.9" fill="#f6f0e0"/><circle cx="77.8" cy="68.6" r="1.9" fill="#8d7d60"/><circle cx="88.2" cy="63.7" r="2.5" fill="#f6f0e0"/><circle cx="69.0" cy="51.3" r="2.1" fill="#f6f0e0"/><circle cx="76.8" cy="74.2" r="1.2" fill="#8d7d60"/><circle cx="76.5" cy="63.3" r="1.0" fill="#ddd2b6"/><circle cx="71.5" cy="60.7" r="1.3" fill="#ece2c8"/><circle cx="86.1" cy="71.2" r="1.3" fill="#ece2c8"/><circle cx="65.9" cy="72.1" r="1.1" fill="#8d7d60"/><circle cx="98.4" cy="66.7" r="1.0" fill="#f6f0e0"/><circle cx="86.8" cy="52.9" r="1.2" fill="#f6f0e0"/><circle cx="68.4" cy="76.6" r="2.1" fill="#f6f0e0"/><circle cx="87.8" cy="62.6" r="2.3" fill="#ddd2b6"/><circle cx="90.1" cy="69.8" r="2.3" fill="#f6f0e0"/><circle cx="87.9" cy="63.6" r="1.2" fill="#ece2c8"/><circle cx="87.0" cy="68.2" r="2.5" fill="#8d7d60"/><circle cx="94.8" cy="78.8" r="2.2" fill="#f6f0e0"/><circle cx="78.3" cy="61.8" r="2.0" fill="#8d7d60"/><circle cx="70.7" cy="44.6" r="2.2" fill="#f6f0e0"/><circle cx="71.7" cy="73.6" r="1.8" fill="#ddd2b6"/><circle cx="96.7" cy="47.4" r="2.0" fill="#ece2c8"/><circle cx="94.5" cy="74.0" r="1.1" fill="#8d7d60"/><circle cx="85.4" cy="50.8" r="1.7" fill="#ddd2b6"/><circle cx="71.1" cy="57.0" r="2.4" fill="#ece2c8"/><circle cx="76.3" cy="45.9" r="0.9" fill="#8d7d60"/><path d="M0 60L56 48L96 82L44 100H0Z" fill="#7a1b20"/><path d="M12 70L54 56L86 84L46 100H20Z" fill="#22869a"/><circle cx="78.0" cy="93.6" r="1.8" fill="#135a6a"/><circle cx="15.2" cy="78.0" r="1.9" fill="#3fb3c2"/><circle cx="41.3" cy="99.7" r="1.6" fill="#3fb3c2"/><circle cx="59.8" cy="73.4" r="1.8" fill="#135a6a"/><circle cx="83.1" cy="58.2" r="1.8" fill="#135a6a"/><circle cx="13.3" cy="69.4" r="1.5" fill="#2aa4b6"/><circle cx="56.1" cy="80.5" r="1.9" fill="#62c6d2"/><circle cx="76.0" cy="90.6" r="1.6" fill="#135a6a"/><circle cx="40.9" cy="78.9" r="0.5" fill="#3fb3c2"/><circle cx="20.4" cy="81.2" r="0.5" fill="#a4e4e6"/><circle cx="36.9" cy="72.2" r="1.3" fill="#a4e4e6"/><circle cx="55.1" cy="77.3" r="1.4" fill="#3fb3c2"/><circle cx="45.0" cy="78.0" r="1.6" fill="#62c6d2"/><circle cx="80.3" cy="96.0" r="1.0" fill="#2aa4b6"/><circle cx="78.3" cy="62.5" r="0.7" fill="#a4e4e6"/><circle cx="76.1" cy="74.5" r="1.0" fill="#a4e4e6"/><circle cx="75.0" cy="82.8" r="0.6" fill="#62c6d2"/><circle cx="68.8" cy="66.9" r="1.6" fill="#135a6a"/><circle cx="52.7" cy="81.2" r="1.4" fill="#62c6d2"/><circle cx="64.4" cy="95.8" r="1.8" fill="#135a6a"/><circle cx="18.2" cy="68.4" r="1.5" fill="#a4e4e6"/><circle cx="29.4" cy="60.3" r="1.5" fill="#62c6d2"/><circle cx="66.6" cy="69.3" r="1.7" fill="#2aa4b6"/><circle cx="72.8" cy="59.3" r="0.9" fill="#a4e4e6"/><circle cx="75.6" cy="61.9" r="1.1" fill="#a4e4e6"/><circle cx="71.1" cy="57.6" r="1.9" fill="#135a6a"/><circle cx="67.5" cy="95.0" r="0.6" fill="#3fb3c2"/><circle cx="64.0" cy="83.7" r="1.2" fill="#2aa4b6"/><circle cx="84.0" cy="64.7" r="0.7" fill="#2aa4b6"/><circle cx="84.1" cy="78.3" r="1.5" fill="#135a6a"/><circle cx="26.5" cy="58.4" r="1.8" fill="#a4e4e6"/><circle cx="80.6" cy="83.0" r="1.0" fill="#62c6d2"/><circle cx="13.0" cy="77.5" r="0.7" fill="#3fb3c2"/><circle cx="15.0" cy="66.1" r="1.7" fill="#3fb3c2"/><circle cx="72.5" cy="57.5" r="1.2" fill="#2aa4b6"/><circle cx="44.8" cy="66.7" r="1.2" fill="#a4e4e6"/><circle cx="41.0" cy="84.8" r="0.8" fill="#2aa4b6"/><circle cx="25.9" cy="83.4" r="1.8" fill="#3fb3c2"/><circle cx="43.5" cy="76.9" r="0.5" fill="#62c6d2"/><circle cx="80.8" cy="85.0" r="1.3" fill="#3fb3c2"/><circle cx="82.5" cy="75.0" r="1.5" fill="#a4e4e6"/><circle cx="37.1" cy="84.5" r="0.8" fill="#3fb3c2"/><circle cx="71.5" cy="97.9" r="1.7" fill="#3fb3c2"/><circle cx="60.9" cy="97.4" r="1.7" fill="#3fb3c2"/><circle cx="62.4" cy="81.3" r="1.7" fill="#135a6a"/><circle cx="56.7" cy="63.3" r="0.9" fill="#3fb3c2"/><circle cx="34.3" cy="89.7" r="1.1" fill="#3fb3c2"/><circle cx="31.2" cy="69.7" r="1.3" fill="#62c6d2"/><circle cx="69.9" cy="76.1" r="1.0" fill="#3fb3c2"/><circle cx="44.9" cy="86.8" r="1.8" fill="#2aa4b6"/><circle cx="40.4" cy="75.2" r="1.4" fill="#a4e4e6"/><circle cx="76.5" cy="96.3" r="0.9" fill="#3fb3c2"/><circle cx="66.9" cy="69.5" r="0.5" fill="#a4e4e6"/><circle cx="34.9" cy="94.6" r="1.7" fill="#62c6d2"/><circle cx="27.4" cy="59.6" r="0.7" fill="#62c6d2"/><circle cx="21.5" cy="86.4" r="1.8" fill="#3fb3c2"/><circle cx="37.2" cy="57.2" r="1.4" fill="#2aa4b6"/><circle cx="67.9" cy="89.3" r="1.5" fill="#a4e4e6"/><circle cx="34.4" cy="72.6" r="1.8" fill="#135a6a"/><circle cx="72.0" cy="93.7" r="1.8" fill="#135a6a"/><circle cx="81.4" cy="82.7" r="1.4" fill="#2aa4b6"/><circle cx="30.0" cy="73.4" r="0.8" fill="#2aa4b6"/><circle cx="65.3" cy="69.2" r="1.5" fill="#a4e4e6"/><circle cx="12.1" cy="87.0" r="0.9" fill="#135a6a"/><circle cx="24.6" cy="62.4" r="1.9" fill="#135a6a"/><circle cx="53.0" cy="94.5" r="1.2" fill="#a4e4e6"/><circle cx="81.5" cy="60.9" r="1.4" fill="#3fb3c2"/><circle cx="61.0" cy="74.9" r="1.7" fill="#62c6d2"/><circle cx="59.3" cy="61.1" r="0.8" fill="#3fb3c2"/><circle cx="67.3" cy="89.0" r="1.9" fill="#a4e4e6"/><circle cx="44.3" cy="90.5" r="0.6" fill="#3fb3c2"/><circle cx="50.1" cy="78.5" r="0.7" fill="#62c6d2"/><circle cx="84.4" cy="59.0" r="0.5" fill="#62c6d2"/><circle cx="43.3" cy="87.5" r="0.5" fill="#62c6d2"/><circle cx="12.7" cy="79.7" r="1.0" fill="#62c6d2"/><circle cx="57.3" cy="80.6" r="1.2" fill="#a4e4e6"/><circle cx="33.9" cy="80.2" r="0.9" fill="#2aa4b6"/><circle cx="25.5" cy="73.2" r="0.6" fill="#3fb3c2"/><circle cx="63.8" cy="57.6" r="1.0" fill="#62c6d2"/><circle cx="13.2" cy="64.1" r="1.4" fill="#2aa4b6"/><circle cx="28.2" cy="63.8" r="1.8" fill="#62c6d2"/><circle cx="16.4" cy="69.8" r="1.5" fill="#62c6d2"/><circle cx="73.6" cy="62.6" r="0.6" fill="#a4e4e6"/><circle cx="83.2" cy="58.6" r="0.6" fill="#2aa4b6"/><circle cx="70.7" cy="85.2" r="0.7" fill="#2aa4b6"/><circle cx="16.0" cy="88.0" r="0.6" fill="#2aa4b6"/><circle cx="81.4" cy="87.4" r="1.2" fill="#2aa4b6"/><circle cx="65.5" cy="87.9" r="1.6" fill="#a4e4e6"/><circle cx="37.9" cy="76.0" r="1.7" fill="#3fb3c2"/><circle cx="40.3" cy="85.9" r="0.6" fill="#2aa4b6"/><circle cx="73.6" cy="77.5" r="1.0" fill="#2aa4b6"/><circle cx="56.8" cy="61.0" r="0.6" fill="#135a6a"/><circle cx="77.5" cy="79.4" r="1.8" fill="#a4e4e6"/><circle cx="67.9" cy="72.3" r="1.1" fill="#a4e4e6"/><circle cx="35.4" cy="98.2" r="1.2" fill="#a4e4e6"/><circle cx="21.4" cy="63.4" r="1.3" fill="#3fb3c2"/><circle cx="64.6" cy="62.6" r="1.1" fill="#2aa4b6"/><circle cx="22.0" cy="59.5" r="1.4" fill="#2aa4b6"/><circle cx="38.3" cy="69.9" r="0.9" fill="#135a6a"/><circle cx="34.9" cy="74.8" r="1.3" fill="#135a6a"/><circle cx="79.8" cy="93.2" r="1.5" fill="#62c6d2"/><circle cx="62.7" cy="77.1" r="0.5" fill="#62c6d2"/><circle cx="65.7" cy="64.4" r="1.0" fill="#a4e4e6"/><circle cx="49.6" cy="94.3" r="1.7" fill="#3fb3c2"/><circle cx="58.4" cy="85.3" r="1.0" fill="#62c6d2"/><circle cx="25.7" cy="72.5" r="1.9" fill="#3fb3c2"/><circle cx="64.7" cy="91.1" r="0.6" fill="#a4e4e6"/><circle cx="36.2" cy="73.7" r="1.0" fill="#62c6d2"/><circle cx="29.1" cy="68.8" r="1.3" fill="#2aa4b6"/><circle cx="19.2" cy="62.0" r="1.0" fill="#a4e4e6"/><circle cx="22.4" cy="66.0" r="0.9" fill="#3fb3c2"/><circle cx="49.7" cy="95.1" r="1.3" fill="#3fb3c2"/><circle cx="70.4" cy="94.0" r="1.1" fill="#3fb3c2"/><circle cx="47.1" cy="78.5" r="1.0" fill="#135a6a"/><circle cx="71.5" cy="68.2" r="0.8" fill="#2aa4b6"/><circle cx="21.9" cy="65.2" r="0.7" fill="#a4e4e6"/><circle cx="25.6" cy="90.5" r="0.6" fill="#2aa4b6"/><circle cx="62.2" cy="94.2" r="0.6" fill="#2aa4b6"/><circle cx="56.5" cy="63.3" r="1.5" fill="#62c6d2"/><circle cx="28.1" cy="95.1" r="1.3" fill="#62c6d2"/><circle cx="75.1" cy="78.0" r="1.0" fill="#135a6a"/><circle cx="17.1" cy="70.0" r="1.5" fill="#3fb3c2"/><circle cx="61.6" cy="69.7" r="0.9" fill="#3fb3c2"/><circle cx="18.6" cy="70.9" r="1.7" fill="#a4e4e6"/><circle cx="16.7" cy="85.0" r="1.7" fill="#62c6d2"/><circle cx="85.2" cy="96.0" r="0.8" fill="#a4e4e6"/><circle cx="73.7" cy="67.1" r="0.9" fill="#135a6a"/><circle cx="42.8" cy="56.5" r="0.7" fill="#a4e4e6"/><circle cx="15.6" cy="75.0" r="1.8" fill="#2aa4b6"/><circle cx="32.6" cy="89.8" r="1.5" fill="#135a6a"/><circle cx="54.6" cy="82.8" r="1.4" fill="#a4e4e6"/><circle cx="22.6" cy="60.2" r="1.0" fill="#3fb3c2"/><circle cx="63.5" cy="64.5" r="1.9" fill="#2aa4b6"/><circle cx="73.6" cy="98.7" r="0.8" fill="#2aa4b6"/><circle cx="17.8" cy="59.1" r="1.2" fill="#135a6a"/><circle cx="54.2" cy="86.8" r="1.8" fill="#2aa4b6"/><circle cx="53.7" cy="77.9" r="0.5" fill="#3fb3c2"/><circle cx="65.6" cy="92.6" r="1.1" fill="#3fb3c2"/><circle cx="55.6" cy="58.3" r="1.5" fill="#a4e4e6"/><circle cx="44.4" cy="86.3" r="1.4" fill="#a4e4e6"/><ellipse cx="48" cy="91" rx="21" ry="13" fill="#6fb59c"/><ellipse cx="48" cy="94" rx="16" ry="9" fill="#2f96a0"/><circle cx="59.2" cy="91.6" r="1.2" fill="#b0ece4"/><circle cx="37.2" cy="91.6" r="1.2" fill="#52c6c6"/><circle cx="50.2" cy="99.5" r="0.6" fill="#52c6c6"/><circle cx="47.3" cy="93.6" r="1.2" fill="#b0ece4"/><circle cx="46.2" cy="87.5" r="0.7" fill="#52c6c6"/><circle cx="63.8" cy="86.9" r="0.7" fill="#b0ece4"/><circle cx="42.6" cy="87.7" r="1.2" fill="#52c6c6"/><circle cx="39.5" cy="95.6" r="0.9" fill="#52c6c6"/><circle cx="37.4" cy="94.2" r="1.3" fill="#b0ece4"/><circle cx="41.0" cy="87.3" r="0.5" fill="#52c6c6"/><circle cx="35.8" cy="90.7" r="1.0" fill="#b0ece4"/><circle cx="51.8" cy="91.6" r="1.2" fill="#52c6c6"/><circle cx="43.6" cy="88.1" r="0.6" fill="#b0ece4"/><circle cx="35.1" cy="90.8" r="0.9" fill="#b0ece4"/><circle cx="47.2" cy="92.8" r="1.0" fill="#b0ece4"/><circle cx="62.3" cy="93.9" r="0.9" fill="#52c6c6"/><circle cx="61.2" cy="96.6" r="0.6" fill="#52c6c6"/><circle cx="37.8" cy="96.6" r="0.9" fill="#b0ece4"/><circle cx="63.2" cy="93.3" r="0.9" fill="#52c6c6"/><circle cx="46.1" cy="98.3" r="0.6" fill="#b0ece4"/><circle cx="55.9" cy="89.2" r="0.8" fill="#52c6c6"/><circle cx="48.2" cy="87.5" r="0.9" fill="#52c6c6"/><circle cx="60.3" cy="94.2" r="1.2" fill="#b0ece4"/><circle cx="42.2" cy="90.2" r="0.6" fill="#b0ece4"/><circle cx="39.2" cy="97.2" r="0.7" fill="#52c6c6"/><circle cx="52.8" cy="87.3" r="1.1" fill="#52c6c6"/><circle cx="33.7" cy="87.3" r="0.8" fill="#52c6c6"/><circle cx="62.0" cy="91.0" r="0.8" fill="#52c6c6"/><circle cx="41.7" cy="95.7" r="1.0" fill="#52c6c6"/><circle cx="42.0" cy="96.3" r="0.6" fill="#52c6c6"/><circle cx="37.8" cy="87.3" r="0.6" fill="#b0ece4"/><circle cx="49.2" cy="89.7" r="1.2" fill="#52c6c6"/><circle cx="55.2" cy="89.8" r="1.0" fill="#52c6c6"/><circle cx="42.3" cy="95.4" r="1.2" fill="#b0ece4"/><circle cx="37.3" cy="93.0" r="1.2" fill="#b0ece4"/><circle cx="33.7" cy="89.8" r="1.0" fill="#b0ece4"/><circle cx="42.5" cy="99.1" r="0.8" fill="#52c6c6"/><circle cx="51.2" cy="98.2" r="1.2" fill="#b0ece4"/><circle cx="57.2" cy="97.8" r="0.7" fill="#b0ece4"/><circle cx="42.0" cy="99.9" r="0.8" fill="#b0ece4"/><circle cx="32.3" cy="94.8" r="1.3" fill="#52c6c6"/><circle cx="51.3" cy="96.7" r="1.2" fill="#b0ece4"/><circle cx="39.5" cy="97.3" r="0.8" fill="#b0ece4"/><circle cx="54.7" cy="89.4" r="0.8" fill="#52c6c6"/><circle cx="35.0" cy="91.1" r="0.6" fill="#b0ece4"/><path d="M0 74L8 76L18 100H0Z" fill="#8a86a8"/><circle cx="13.6" cy="77.8" r="1.1" fill="#c8c0e0"/><circle cx="15.7" cy="98.6" r="1.2" fill="#30306a"/><circle cx="17.0" cy="79.4" r="0.8" fill="#c8c0e0"/><circle cx="2.9" cy="99.2" r="0.7" fill="#c8c0e0"/><circle cx="9.4" cy="85.2" r="1.6" fill="#c8c0e0"/><circle cx="14.3" cy="92.3" r="1.0" fill="#f0f0fa"/><circle cx="0.4" cy="94.3" r="0.9" fill="#c8c0e0"/><circle cx="8.9" cy="86.7" r="1.7" fill="#f0f0fa"/><circle cx="2.4" cy="86.2" r="1.8" fill="#f0f0fa"/><circle cx="6.5" cy="77.6" r="1.7" fill="#30306a"/><circle cx="17.7" cy="84.0" r="0.6" fill="#30306a"/><circle cx="16.0" cy="92.7" r="0.8" fill="#f0f0fa"/><circle cx="13.0" cy="81.9" r="0.9" fill="#c8c0e0"/><circle cx="3.4" cy="94.7" r="1.6" fill="#f0f0fa"/><circle cx="15.6" cy="82.6" r="1.1" fill="#c8c0e0"/><circle cx="9.4" cy="91.0" r="1.4" fill="#f0f0fa"/><circle cx="7.8" cy="90.8" r="1.7" fill="#30306a"/><circle cx="7.4" cy="83.6" r="1.3" fill="#f0f0fa"/><circle cx="3.5" cy="77.8" r="0.9" fill="#f0f0fa"/><circle cx="12.1" cy="85.9" r="1.3" fill="#c8c0e0"/><circle cx="1.7" cy="78.5" r="1.6" fill="#c8c0e0"/><circle cx="0.1" cy="85.2" r="1.5" fill="#30306a"/><circle cx="2.4" cy="80.1" r="1.5" fill="#30306a"/><circle cx="16.3" cy="94.3" r="1.3" fill="#f0f0fa"/><circle cx="9.1" cy="77.4" r="1.7" fill="#30306a"/><circle cx="10.5" cy="83.1" r="1.6" fill="#f0f0fa"/><circle cx="11.4" cy="77.2" r="1.7" fill="#f0f0fa"/><circle cx="6.6" cy="77.9" r="0.6" fill="#c8c0e0"/><circle cx="0.5" cy="75.7" r="1.6" fill="#c8c0e0"/><circle cx="7.8" cy="86.2" r="1.3" fill="#f0f0fa"/><path d="M62 100L96 86L100 84V100Z" fill="#9d96b8"/><circle cx="88.9" cy="90.3" r="1.2" fill="#3a3a70"/><circle cx="71.2" cy="100.0" r="1.0" fill="#d0c8e0"/><circle cx="75.5" cy="98.1" r="0.8" fill="#d0c8e0"/><circle cx="81.5" cy="98.6" r="0.8" fill="#3a3a70"/><circle cx="85.9" cy="94.7" r="0.6" fill="#d0c8e0"/><circle cx="96.6" cy="97.9" r="1.4" fill="#3a3a70"/><circle cx="81.5" cy="95.9" r="1.0" fill="#3a3a70"/><circle cx="81.4" cy="94.5" r="1.4" fill="#d0c8e0"/><circle cx="88.3" cy="99.8" r="1.2" fill="#3a3a70"/><circle cx="80.1" cy="94.1" r="0.9" fill="#f4f0fa"/><circle cx="99.7" cy="91.9" r="1.4" fill="#f4f0fa"/><circle cx="93.4" cy="88.1" r="1.4" fill="#d0c8e0"/><circle cx="95.4" cy="86.2" r="1.1" fill="#f4f0fa"/><circle cx="100.0" cy="97.6" r="1.0" fill="#d0c8e0"/><circle cx="76.1" cy="95.4" r="0.6" fill="#f4f0fa"/><circle cx="91.2" cy="94.0" r="0.7" fill="#3a3a70"/><circle cx="89.5" cy="92.0" r="0.6" fill="#3a3a70"/><path d="M86 60L86 75L89.5 71.5L92 77L94 76L91.5 70.5L96 70Z" fill="#fff" stroke="#222" stroke-width="0.7"/></svg></div>
<div class="btn" style="left:1590px;top:361px;width:98px;height:32px;background:#2ed6c9;padding-top:8px"><svg style="vertical-align:0px" width="14" height="10" viewBox="0 0 14 10"><path d="M1 5 Q7 -1.5 13 5 Q7 11.5 1 5Z" fill="none" stroke="#fff" stroke-width="1.2"/><circle cx="7" cy="5" r="1.8" fill="none" stroke="#fff" stroke-width="1.2"/></svg>查看</div>
<div class="btn" style="left:1698px;top:361px;width:98px;height:32px;background:#476dd6;padding-top:8px"><svg style="vertical-align:-1px" width="13" height="13" viewBox="0 0 13 13"><path d="M2 10 L8.5 3.5 L10 5 L3.5 11.5 Z M2 12H11" fill="none" stroke="#fff" stroke-width="1.3"/></svg>修改</div>
<div class="btn" style="left:1590px;top:407px;width:126px;height:32px;background:#2ed6c9;padding-top:8px"><svg style="vertical-align:0px" width="14" height="10" viewBox="0 0 14 10"><path d="M1 5 Q7 -1.5 13 5 Q7 11.5 1 5Z" fill="none" stroke="#fff" stroke-width="1.2"/><circle cx="7" cy="5" r="1.8" fill="none" stroke="#fff" stroke-width="1.2"/></svg>查看评论</div>
<div class="btn" style="left:1726px;top:403px;width:126px;height:40px;background:#fe2b86;padding-top:12px"><svg style="margin-left:2px;margin-right:5px" width="14" height="14" viewBox="0 0 14 14"><circle cx="7" cy="7" r="5.8" fill="none" stroke="#fff" stroke-width="1.3"/><path d="M7 2.5V11.5M7 8L4.6 9.6" fill="none" stroke="#fff" stroke-width="1.1"/></svg>出价记录</div>
<div class="btn" style="left:1590px;top:453px;width:98px;height:32px;background:#fd3a2c;padding-top:8px"><svg width="13" height="13" viewBox="0 0 13 13"><path d="M1 4Q6.5 0.5 12 4Z" fill="none" stroke="#fff" stroke-width="1.1"/><path d="M2.5 5V12H10.5V5M5.2 6.5V10.5M7.8 6.5V10.5" fill="none" stroke="#fff" stroke-width="1.1"/></svg>删除</div>
<div class="cb" style="top:579px;border-color:#ececee"></div>
<div class="td fd n" style="left:311px;top:574px">2</div>
<div class="td fd n" style="left:361px;top:562px">77777777<br>77</div>
<div class="td fd" style="left:455px;top:562px">物品名称<br>7</div>
<div class="td fd" style="left:540px;top:562px">物品分类<br>7</div>
<div class="td fd" style="left:825px;top:562px">物品年份<br>7</div>
<div class="td fd" style="left:910px;top:562px">物品工艺<br>7</div>
<div class="td fd n" style="left:995px;top:574px">7</div>
<div class="td fd n" style="left:1080px;top:574px">0</div>
<div class="td fd n" style="left:1165px;top:574px">99.9</div>
<div class="td fd n" style="left:1250px;top:574px">7</div>
<div class="td fd n" style="left:1335px;top:574px">99.9</div>
<div class="td fd n" style="left:1420px;top:574px">7</div>
<div class="td fd n" style="left:1505px;top:574px">199</div>
<div class="a" style="left:625px;top:534px;width:100px;height:100px;overflow:hidden"><svg width="100" height="100" viewBox="0 0 100 100"><rect width="100" height="100" fill="#fcfcfe"/><rect x="0" y="42" width="100" height="48.5" fill="#c4bfc8"/><rect x="0" y="68" width="100" height="22.5" fill="#cfcad3"/><path d="M8.5 4.5L13 9L8.5 13.5L4 9Z" fill="#c8142e"/><circle cx="8.5" cy="9" r="1.2" fill="#f4c0c0"/><path d="M9.6 62A42.7 45 0 0 1 95 62Z" fill="#0c0c0f"/><circle cx="86.8" cy="59.2" r="0.4" fill="#7d8a92"/><circle cx="44.0" cy="31.9" r="1.0" fill="#5c6870"/><circle cx="36.1" cy="33.4" r="0.4" fill="#a8b4bc"/><circle cx="90.0" cy="48.3" r="1.0" fill="#5c6870"/><circle cx="57.2" cy="41.6" r="0.6" fill="#7d8a92"/><circle cx="80.7" cy="38.7" r="1.1" fill="#c8d0d6"/><circle cx="48.5" cy="56.9" r="0.5" fill="#a8b4bc"/><circle cx="41.4" cy="30.8" r="0.8" fill="#a8b4bc"/><circle cx="89.7" cy="41.6" r="0.7" fill="#5c6870"/><circle cx="74.9" cy="38.4" r="1.2" fill="#c8d0d6"/><circle cx="29.6" cy="52.4" r="1.0" fill="#c8d0d6"/><circle cx="65.2" cy="34.7" r="0.6" fill="#c8d0d6"/><circle cx="54.1" cy="55.1" r="0.7" fill="#c8d0d6"/><circle cx="82.8" cy="42.1" r="0.9" fill="#c8d0d6"/><circle cx="53.0" cy="33.8" r="0.7" fill="#a8b4bc"/><circle cx="81.1" cy="47.6" r="1.0" fill="#c8d0d6"/><circle cx="40.3" cy="59.5" r="1.0" fill="#c8d0d6"/><circle cx="40.5" cy="33.3" r="0.8" fill="#7d8a92"/><circle cx="74.5" cy="38.0" r="0.4" fill="#a8b4bc"/><circle cx="60.6" cy="49.9" r="1.1" fill="#a8b4bc"/><circle cx="79.5" cy="34.6" r="0.6" fill="#7d8a92"/><circle cx="48.5" cy="51.1" r="0.4" fill="#5c6870"/><circle cx="43.9" cy="34.7" r="0.4" fill="#7d8a92"/><circle cx="36.4" cy="54.5" r="0.5" fill="#a8b4bc"/><circle cx="60.4" cy="53.8" r="0.6" fill="#7d8a92"/><circle cx="18.3" cy="58.8" r="0.9" fill="#7d8a92"/><circle cx="38.6" cy="43.1" r="0.6" fill="#7d8a92"/><circle cx="82.9" cy="52.4" r="1.1" fill="#a8b4bc"/><circle cx="52.0" cy="33.9" r="0.9" fill="#5c6870"/><circle cx="74.8" cy="59.2" r="0.8" fill="#c8d0d6"/><circle cx="53.1" cy="37.5" r="1.1" fill="#5c6870"/><circle cx="36.7" cy="47.2" r="0.7" fill="#7d8a92"/><circle cx="68.4" cy="59.6" r="0.9" fill="#5c6870"/><circle cx="24.9" cy="48.2" r="0.8" fill="#7d8a92"/><circle cx="50.0" cy="34.8" r="0.9" fill="#5c6870"/><circle cx="36.5" cy="40.8" r="0.8" fill="#7d8a92"/><circle cx="28.9" cy="39.5" r="0.5" fill="#7d8a92"/><circle cx="31.1" cy="34.1" r="0.6" fill="#c8d0d6"/><circle cx="50.7" cy="44.7" r="0.7" fill="#a8b4bc"/><circle cx="70.5" cy="41.2" r="0.8" fill="#7d8a92"/><circle cx="81.5" cy="58.5" r="0.9" fill="#7d8a92"/><circle cx="65.8" cy="42.8" r="0.4" fill="#7d8a92"/><circle cx="62.0" cy="36.1" r="1.2" fill="#5c6870"/><circle cx="40.2" cy="56.6" r="0.7" fill="#7d8a92"/><circle cx="40.0" cy="55.4" r="0.9" fill="#7d8a92"/><circle cx="63.9" cy="42.2" r="1.1" fill="#7d8a92"/><circle cx="40.0" cy="51.3" r="0.6" fill="#c8d0d6"/><circle cx="31.8" cy="46.0" r="0.7" fill="#c8d0d6"/><circle cx="28.1" cy="38.1" r="1.1" fill="#5c6870"/><circle cx="79.2" cy="48.4" r="1.2" fill="#7d8a92"/><circle cx="19.8" cy="49.1" r="1.0" fill="#c8d0d6"/><circle cx="38.9" cy="59.6" r="0.5" fill="#5c6870"/><circle cx="37.4" cy="44.4" r="0.8" fill="#c8d0d6"/><circle cx="85.1" cy="55.3" r="0.6" fill="#a8b4bc"/><circle cx="29.3" cy="46.9" r="0.8" fill="#7d8a92"/><circle cx="60.2" cy="54.6" r="0.5" fill="#5c6870"/><circle cx="30.7" cy="45.1" r="1.0" fill="#7d8a92"/><circle cx="75.5" cy="57.9" r="0.9" fill="#7d8a92"/><circle cx="27.3" cy="36.4" r="0.6" fill="#5c6870"/><circle cx="49.6" cy="44.3" r="0.5" fill="#c8d0d6"/><circle cx="24.9" cy="44.1" r="1.0" fill="#5c6870"/><circle cx="81.0" cy="38.5" r="1.0" fill="#a8b4bc"/><circle cx="51.6" cy="51.2" r="1.0" fill="#c8d0d6"/><circle cx="54.7" cy="42.9" r="0.7" fill="#c8d0d6"/><circle cx="68.8" cy="42.5" r="1.2" fill="#5c6870"/><circle cx="69.4" cy="57.9" r="0.5" fill="#a8b4bc"/><circle cx="56.4" cy="32.6" r="1.1" fill="#c8d0d6"/><circle cx="88.4" cy="48.2" r="0.4" fill="#c8d0d6"/><circle cx="55.7" cy="57.7" r="0.8" fill="#a8b4bc"/><circle cx="85.9" cy="51.5" r="0.9" fill="#a8b4bc"/><circle cx="76.7" cy="52.8" r="0.6" fill="#a8b4bc"/><circle cx="53.3" cy="47.4" r="0.4" fill="#c8d0d6"/><circle cx="52.7" cy="44.0" r="0.5" fill="#a8b4bc"/><circle cx="88.0" cy="52.6" r="0.7" fill="#c8d0d6"/><circle cx="56.4" cy="49.4" r="0.5" fill="#c8d0d6"/><circle cx="84.6" cy="58.3" r="0.8" fill="#c8d0d6"/><circle cx="72.3" cy="32.1" r="1.0" fill="#c8d0d6"/><circle cx="36.4" cy="47.9" r="1.1" fill="#a8b4bc"/><circle cx="21.9" cy="43.5" r="1.2" fill="#5c6870"/><circle cx="29.2" cy="35.9" r="0.8" fill="#7d8a92"/><circle cx="44.4" cy="44.8" r="0.7" fill="#c8d0d6"/><circle cx="32.7" cy="49.7" r="0.8" fill="#a8b4bc"/><circle cx="52.8" cy="44.8" r="1.1" fill="#7d8a92"/><circle cx="36.6" cy="37.0" r="0.7" fill="#5c6870"/><circle cx="65.0" cy="39.8" r="1.1" fill="#7d8a92"/><circle cx="54.6" cy="33.4" r="0.9" fill="#a8b4bc"/><circle cx="75.4" cy="48.0" r="0.6" fill="#a8b4bc"/><circle cx="86.4" cy="45.6" r="0.8" fill="#7d8a92"/><circle cx="76.9" cy="39.3" r="0.7" fill="#5c6870"/><circle cx="43.6" cy="37.7" r="0.7" fill="#c8d0d6"/><circle cx="49.8" cy="36.2" r="1.1" fill="#c8d0d6"/><circle cx="37.7" cy="31.6" r="1.1" fill="#c8d0d6"/><circle cx="31.6" cy="49.7" r="0.7" fill="#5c6870"/><circle cx="37.3" cy="45.3" r="0.7" fill="#5c6870"/><circle cx="38.2" cy="51.2" r="0.9" fill="#5c6870"/><circle cx="71.5" cy="52.3" r="1.1" fill="#5c6870"/><circle cx="56.3" cy="48.3" r="0.5" fill="#5c6870"/><circle cx="46.5" cy="32.1" r="1.2" fill="#5c6870"/><circle cx="49.7" cy="29.1" r="1.1" fill="#5c6870"/><circle cx="43.9" cy="58.1" r="1.1" fill="#c8d0d6"/><circle cx="77.4" cy="46.8" r="0.8" fill="#c8d0d6"/><circle cx="63.9" cy="31.3" r="0.7" fill="#c8d0d6"/><circle cx="32.7" cy="34.8" r="0.7" fill="#5c6870"/><circle cx="68.9" cy="51.5" r="0.4" fill="#5c6870"/><circle cx="64.7" cy="47.4" r="1.1" fill="#a8b4bc"/><circle cx="79.3" cy="41.0" r="1.0" fill="#a8b4bc"/><circle cx="41.1" cy="46.2" r="0.5" fill="#c8d0d6"/><circle cx="73.2" cy="43.1" r="1.1" fill="#7d8a92"/><circle cx="60.3" cy="44.9" r="1.2" fill="#c8d0d6"/><circle cx="78.5" cy="41.9" r="0.7" fill="#c8d0d6"/><circle cx="85.5" cy="49.8" r="1.1" fill="#7d8a92"/><circle cx="46.3" cy="42.0" r="1.0" fill="#5c6870"/><circle cx="25.6" cy="38.3" r="0.5" fill="#a8b4bc"/><circle cx="48.8" cy="60.4" r="0.7" fill="#c8d0d6"/><circle cx="21.6" cy="57.5" r="0.6" fill="#c8d0d6"/><circle cx="68.1" cy="45.0" r="0.4" fill="#7d8a92"/><circle cx="77.2" cy="44.3" r="0.9" fill="#a8b4bc"/><circle cx="28.1" cy="43.2" r="0.5" fill="#7d8a92"/><circle cx="35.8" cy="42.3" r="1.0" fill="#a8b4bc"/><circle cx="63.1" cy="37.8" r="0.9" fill="#c8d0d6"/><circle cx="83.1" cy="51.1" r="0.8" fill="#a8b4bc"/><circle cx="54.8" cy="55.2" r="0.5" fill="#a8b4bc"/><circle cx="30.5" cy="33.1" r="0.7" fill="#a8b4bc"/><circle cx="48.8" cy="39.9" r="1.0" fill="#7d8a92"/><circle cx="58.5" cy="42.5" r="0.6" fill="#c8d0d6"/><circle cx="68.6" cy="50.5" r="0.9" fill="#7d8a92"/><circle cx="61.3" cy="52.3" r="0.6" fill="#c8d0d6"/><circle cx="59.7" cy="48.6" r="0.9" fill="#5c6870"/><circle cx="68.6" cy="42.6" r="0.4" fill="#a8b4bc"/><circle cx="78.2" cy="46.9" r="0.4" fill="#a8b4bc"/><circle cx="68.0" cy="58.1" r="1.0" fill="#7d8a92"/><circle cx="88.4" cy="57.5" r="0.8" fill="#5c6870"/><circle cx="41.4" cy="54.7" r="1.1" fill="#7d8a92"/><circle cx="47.7" cy="40.5" r="1.0" fill="#c8d0d6"/><circle cx="39.4" cy="56.2" r="0.9" fill="#5c6870"/><path d="M55 32Q64 30 67 40Q62 48 56 56Q48 52 47 44Z" fill="#7f8c96" opacity="0.55"/><rect x="45" y="21" width="9" height="1.4" fill="#bbb"/><path d="M14 60H91V65H14Z" fill="#141316"/><path d="M16 63Q12 72 18 78Q26 83 34 78Q30 72 24 73Q22 68 26 64Z" fill="#141316"/><path d="M52 63Q50 70 56 72Q62 72 64 78Q72 82 78 76Q86 80 92 76Q90 68 84 66L80 63Z" fill="#17161a"/></svg></div>
<div class="btn" style="left:1590px;top:520px;width:98px;height:32px;background:#2ed6c9;padding-top:8px"><svg style="vertical-align:0px" width="14" height="10" viewBox="0 0 14 10"><path d="M1 5 Q7 -1.5 13 5 Q7 11.5 1 5Z" fill="none" stroke="#fff" stroke-width="1.2"/><circle cx="7" cy="5" r="1.8" fill="none" stroke="#fff" stroke-width="1.2"/></svg>查看</div>
<div class="btn" style="left:1698px;top:520px;width:98px;height:32px;background:#476dd6;padding-top:8px"><svg style="vertical-align:-1px" width="13" height="13" viewBox="0 0 13 13"><path d="M2 10 L8.5 3.5 L10 5 L3.5 11.5 Z M2 12H11" fill="none" stroke="#fff" stroke-width="1.3"/></svg>修改</div>
<div class="btn" style="left:1590px;top:566px;width:126px;height:32px;background:#2ed6c9;padding-top:8px"><svg style="vertical-align:0px" width="14" height="10" viewBox="0 0 14 10"><path d="M1 5 Q7 -1.5 13 5 Q7 11.5 1 5Z" fill="none" stroke="#fff" stroke-width="1.2"/><circle cx="7" cy="5" r="1.8" fill="none" stroke="#fff" stroke-width="1.2"/></svg>查看评论</div>
<div class="btn" style="left:1726px;top:562px;width:126px;height:40px;background:#fe2b86;padding-top:12px"><svg style="margin-left:2px;margin-right:5px" width="14" height="14" viewBox="0 0 14 14"><circle cx="7" cy="7" r="5.8" fill="none" stroke="#fff" stroke-width="1.3"/><path d="M7 2.5V11.5M7 8L4.6 9.6" fill="none" stroke="#fff" stroke-width="1.1"/></svg>出价记录</div>
<div class="btn" style="left:1590px;top:612px;width:98px;height:32px;background:#fd3a2c;padding-top:8px"><svg width="13" height="13" viewBox="0 0 13 13"><path d="M1 4Q6.5 0.5 12 4Z" fill="none" stroke="#fff" stroke-width="1.1"/><path d="M2.5 5V12H10.5V5M5.2 6.5V10.5M7.8 6.5V10.5" fill="none" stroke="#fff" stroke-width="1.1"/></svg>删除</div>
<div class="cb" style="top:738px;border-color:#ececee"></div>
<div class="td fd n" style="left:311px;top:733px">3</div>
<div class="td fd n" style="left:361px;top:721px">66666666<br>66</div>
<div class="td fd" style="left:455px;top:721px">物品名称<br>6</div>
<div class="td fd" style="left:540px;top:721px">物品分类<br>6</div>
<div class="td fd" style="left:825px;top:721px">物品年份<br>6</div>
<div class="td fd" style="left:910px;top:721px">物品工艺<br>6</div>
<div class="td fd n" style="left:995px;top:733px">6</div>
<div class="td fd n" style="left:1080px;top:733px">0</div>
<div class="td fd n" style="left:1165px;top:733px">99.9</div>
<div class="td fd n" style="left:1250px;top:733px">6</div>
<div class="td fd n" style="left:1335px;top:733px">99.9</div>
<div class="td fd n" style="left:1420px;top:733px">6</div>
<div class="td fd n" style="left:1505px;top:733px">199</div>
<div class="a" style="left:625px;top:693px;width:100px;height:100px;overflow:hidden"><svg width="100" height="100" viewBox="0 0 100 100"><rect width="100" height="100" fill="#c47a58"/><rect x="0" y="92" width="100" height="8" fill="#b86e55"/><path d="M0 20L22 19L60 20L98 21L99 93H0Z" fill="#0e1016"/><rect x="3" y="23" width="93" height="58" fill="none" stroke="#c8d2da" stroke-width="1.2" stroke-dasharray="1 1.2"/><circle cx="26.2" cy="54.4" r="0.7" fill="#4d5862"/><circle cx="60.7" cy="28.5" r="0.4" fill="#4d5862"/><circle cx="28.1" cy="37.7" r="1.2" fill="#4d5862"/><circle cx="53.1" cy="54.7" r="0.7" fill="#7f8a94"/><circle cx="25.6" cy="33.2" r="1.1" fill="#4d5862"/><circle cx="71.0" cy="61.3" r="0.5" fill="#aeb8c0"/><circle cx="31.8" cy="26.7" r="1.1" fill="#4d5862"/><circle cx="57.9" cy="74.7" r="0.7" fill="#4d5862"/><circle cx="40.2" cy="68.2" r="0.8" fill="#7f8a94"/><circle cx="83.2" cy="30.3" r="0.5" fill="#7f8a94"/><circle cx="28.0" cy="61.3" r="1.0" fill="#dfe6ea"/><circle cx="42.5" cy="70.0" r="0.9" fill="#4d5862"/><circle cx="57.0" cy="73.8" r="0.9" fill="#aeb8c0"/><circle cx="81.2" cy="78.5" r="0.9" fill="#7f8a94"/><circle cx="67.2" cy="42.6" r="0.8" fill="#aeb8c0"/><circle cx="68.5" cy="36.4" r="1.1" fill="#dfe6ea"/><circle cx="30.4" cy="28.4" r="1.1" fill="#4d5862"/><circle cx="12.9" cy="68.2" r="0.7" fill="#7f8a94"/><circle cx="6.8" cy="48.1" r="0.7" fill="#aeb8c0"/><circle cx="8.9" cy="58.2" r="0.4" fill="#dfe6ea"/><circle cx="54.0" cy="74.8" r="0.6" fill="#7f8a94"/><circle cx="93.9" cy="41.7" r="0.5" fill="#aeb8c0"/><circle cx="89.5" cy="77.5" r="0.6" fill="#dfe6ea"/><circle cx="18.9" cy="27.3" r="1.1" fill="#dfe6ea"/><circle cx="37.1" cy="32.5" r="1.1" fill="#4d5862"/><circle cx="46.0" cy="53.1" r="0.9" fill="#aeb8c0"/><circle cx="60.2" cy="75.8" r="0.8" fill="#4d5862"/><circle cx="61.5" cy="63.6" r="1.1" fill="#4d5862"/><circle cx="92.0" cy="53.1" r="0.8" fill="#aeb8c0"/><circle cx="75.2" cy="78.3" r="0.7" fill="#4d5862"/><circle cx="59.8" cy="59.1" r="0.4" fill="#dfe6ea"/><circle cx="46.5" cy="61.7" r="0.7" fill="#dfe6ea"/><circle cx="70.7" cy="26.2" r="0.4" fill="#aeb8c0"/><circle cx="90.7" cy="38.6" r="0.8" fill="#dfe6ea"/><circle cx="20.8" cy="35.0" r="1.0" fill="#dfe6ea"/><circle cx="31.7" cy="45.4" r="1.0" fill="#aeb8c0"/><circle cx="91.5" cy="61.9" r="0.5" fill="#7f8a94"/><circle cx="63.2" cy="39.5" r="0.7" fill="#4d5862"/><circle cx="62.8" cy="30.2" r="0.9" fill="#dfe6ea"/><circle cx="65.1" cy="37.1" r="1.0" fill="#7f8a94"/><circle cx="12.1" cy="65.1" r="0.6" fill="#4d5862"/><circle cx="29.1" cy="67.5" r="0.4" fill="#7f8a94"/><circle cx="33.0" cy="70.2" r="0.9" fill="#dfe6ea"/><circle cx="35.3" cy="69.7" r="0.5" fill="#dfe6ea"/><circle cx="57.5" cy="47.7" r="0.8" fill="#dfe6ea"/><circle cx="46.4" cy="59.2" r="0.6" fill="#4d5862"/><circle cx="8.2" cy="47.3" r="0.6" fill="#4d5862"/><circle cx="89.0" cy="72.5" r="1.2" fill="#4d5862"/><circle cx="54.7" cy="78.2" r="1.0" fill="#aeb8c0"/><circle cx="71.4" cy="70.2" r="0.9" fill="#dfe6ea"/><circle cx="53.4" cy="73.0" r="1.1" fill="#dfe6ea"/><circle cx="15.7" cy="38.2" r="0.4" fill="#7f8a94"/><circle cx="84.8" cy="73.6" r="0.9" fill="#aeb8c0"/><circle cx="47.8" cy="31.5" r="0.8" fill="#7f8a94"/><circle cx="64.0" cy="53.3" r="0.7" fill="#aeb8c0"/><circle cx="35.4" cy="38.6" r="1.1" fill="#4d5862"/><circle cx="77.2" cy="28.3" r="0.6" fill="#aeb8c0"/><circle cx="52.6" cy="69.1" r="0.5" fill="#dfe6ea"/><circle cx="87.0" cy="68.5" r="1.1" fill="#aeb8c0"/><circle cx="48.4" cy="55.8" r="0.7" fill="#dfe6ea"/><circle cx="27.1" cy="58.4" r="0.8" fill="#aeb8c0"/><circle cx="47.1" cy="66.9" r="0.4" fill="#aeb8c0"/><circle cx="74.0" cy="27.5" r="0.4" fill="#4d5862"/><circle cx="91.7" cy="71.1" r="0.5" fill="#4d5862"/><circle cx="33.1" cy="42.0" r="0.7" fill="#4d5862"/><circle cx="57.2" cy="44.5" r="0.6" fill="#dfe6ea"/><circle cx="43.2" cy="31.9" r="0.4" fill="#4d5862"/><circle cx="75.8" cy="55.6" r="0.4" fill="#4d5862"/><circle cx="58.8" cy="67.3" r="0.7" fill="#aeb8c0"/><circle cx="60.4" cy="48.3" r="0.7" fill="#4d5862"/><circle cx="72.6" cy="42.0" r="1.2" fill="#4d5862"/><circle cx="46.0" cy="38.2" r="0.8" fill="#aeb8c0"/><circle cx="76.5" cy="37.1" r="0.5" fill="#aeb8c0"/><circle cx="88.3" cy="45.2" r="1.1" fill="#dfe6ea"/><circle cx="15.8" cy="62.3" r="1.2" fill="#4d5862"/><circle cx="64.4" cy="64.6" r="0.9" fill="#aeb8c0"/><circle cx="77.2" cy="63.7" r="0.8" fill="#7f8a94"/><circle cx="73.9" cy="27.4" r="0.5" fill="#aeb8c0"/><circle cx="63.7" cy="45.3" r="1.1" fill="#dfe6ea"/><circle cx="79.9" cy="31.5" r="1.1" fill="#4d5862"/><circle cx="79.4" cy="76.4" r="0.9" fill="#aeb8c0"/><circle cx="8.2" cy="66.4" r="0.8" fill="#7f8a94"/><circle cx="14.5" cy="65.4" r="1.1" fill="#aeb8c0"/><circle cx="54.0" cy="71.9" r="0.5" fill="#aeb8c0"/><circle cx="26.5" cy="34.7" r="0.6" fill="#4d5862"/><circle cx="27.5" cy="57.4" r="1.2" fill="#4d5862"/><circle cx="91.0" cy="45.3" r="0.6" fill="#4d5862"/><circle cx="80.1" cy="77.2" r="0.7" fill="#4d5862"/><circle cx="18.9" cy="46.7" r="1.1" fill="#7f8a94"/><circle cx="13.5" cy="65.4" r="1.1" fill="#4d5862"/><circle cx="57.2" cy="71.3" r="0.5" fill="#7f8a94"/><circle cx="18.0" cy="52.8" r="1.1" fill="#dfe6ea"/><circle cx="64.8" cy="71.2" r="0.9" fill="#dfe6ea"/><circle cx="84.2" cy="41.6" r="0.6" fill="#4d5862"/><circle cx="22.9" cy="55.8" r="0.6" fill="#4d5862"/><circle cx="73.9" cy="32.8" r="1.2" fill="#4d5862"/><circle cx="67.4" cy="36.1" r="0.9" fill="#aeb8c0"/><circle cx="47.8" cy="63.9" r="1.1" fill="#4d5862"/><circle cx="74.7" cy="72.6" r="0.4" fill="#7f8a94"/><circle cx="84.3" cy="60.0" r="1.0" fill="#aeb8c0"/><circle cx="90.3" cy="71.1" r="0.6" fill="#7f8a94"/><circle cx="74.0" cy="32.4" r="0.9" fill="#aeb8c0"/><circle cx="85.1" cy="38.8" r="1.1" fill="#dfe6ea"/><circle cx="21.3" cy="29.9" r="1.0" fill="#aeb8c0"/><circle cx="13.2" cy="70.0" r="0.6" fill="#dfe6ea"/><circle cx="45.3" cy="64.6" r="0.7" fill="#aeb8c0"/><circle cx="34.8" cy="48.6" r="0.8" fill="#7f8a94"/><circle cx="62.3" cy="65.1" r="0.8" fill="#7f8a94"/><circle cx="53.4" cy="31.4" r="0.6" fill="#4d5862"/><circle cx="15.0" cy="72.9" r="1.1" fill="#aeb8c0"/><circle cx="52.0" cy="62.8" r="0.9" fill="#dfe6ea"/><circle cx="72.4" cy="41.0" r="0.9" fill="#dfe6ea"/><circle cx="14.5" cy="76.0" r="0.7" fill="#aeb8c0"/><circle cx="64.4" cy="52.5" r="0.4" fill="#dfe6ea"/><circle cx="65.4" cy="55.6" r="0.5" fill="#7f8a94"/><circle cx="20.9" cy="73.1" r="0.9" fill="#aeb8c0"/><circle cx="14.6" cy="55.2" r="1.1" fill="#4d5862"/><circle cx="54.4" cy="60.0" r="0.8" fill="#dfe6ea"/><circle cx="74.6" cy="63.1" r="0.5" fill="#7f8a94"/><circle cx="72.1" cy="54.3" r="1.0" fill="#dfe6ea"/><circle cx="13.9" cy="39.6" r="0.4" fill="#7f8a94"/><circle cx="8.7" cy="52.3" r="0.6" fill="#dfe6ea"/><circle cx="82.9" cy="76.0" r="0.8" fill="#aeb8c0"/><circle cx="36.4" cy="70.7" r="0.5" fill="#dfe6ea"/><circle cx="57.5" cy="61.8" r="0.9" fill="#aeb8c0"/><circle cx="21.5" cy="35.2" r="0.7" fill="#4d5862"/><circle cx="77.6" cy="65.4" r="0.9" fill="#7f8a94"/><circle cx="81.5" cy="68.1" r="0.8" fill="#7f8a94"/><circle cx="55.6" cy="35.9" r="0.6" fill="#dfe6ea"/><circle cx="7.7" cy="68.4" r="1.1" fill="#4d5862"/><circle cx="33.1" cy="73.9" r="0.6" fill="#4d5862"/><circle cx="92.0" cy="62.1" r="0.6" fill="#4d5862"/><circle cx="7.7" cy="35.3" r="0.9" fill="#aeb8c0"/><circle cx="73.6" cy="60.7" r="0.8" fill="#4d5862"/><circle cx="22.7" cy="67.2" r="0.6" fill="#4d5862"/><circle cx="14.9" cy="40.3" r="0.9" fill="#7f8a94"/><circle cx="17.1" cy="67.8" r="0.9" fill="#aeb8c0"/><circle cx="7.3" cy="58.4" r="0.8" fill="#4d5862"/><circle cx="53.0" cy="75.2" r="0.7" fill="#dfe6ea"/><circle cx="66.8" cy="32.3" r="1.1" fill="#aeb8c0"/><circle cx="68.7" cy="64.9" r="0.7" fill="#7f8a94"/><circle cx="87.9" cy="71.5" r="0.7" fill="#7f8a94"/><circle cx="48.2" cy="30.9" r="0.4" fill="#aeb8c0"/><circle cx="80.2" cy="63.1" r="0.7" fill="#4d5862"/><circle cx="67.2" cy="54.0" r="0.7" fill="#4d5862"/><circle cx="32.1" cy="50.1" r="1.0" fill="#4d5862"/><circle cx="44.0" cy="49.6" r="0.4" fill="#dfe6ea"/><circle cx="37.7" cy="45.0" r="0.8" fill="#4d5862"/><circle cx="24.9" cy="25.1" r="0.6" fill="#dfe6ea"/><circle cx="17.8" cy="49.8" r="0.6" fill="#7f8a94"/><circle cx="7.0" cy="56.6" r="0.8" fill="#aeb8c0"/><circle cx="17.4" cy="57.9" r="0.8" fill="#7f8a94"/><circle cx="10.3" cy="26.2" r="0.8" fill="#4d5862"/><circle cx="7.9" cy="63.6" r="0.6" fill="#aeb8c0"/><circle cx="40.3" cy="26.4" r="1.2" fill="#7f8a94"/><circle cx="26.5" cy="46.0" r="0.6" fill="#dfe6ea"/><circle cx="60.4" cy="43.7" r="0.5" fill="#aeb8c0"/><circle cx="76.9" cy="40.7" r="1.2" fill="#4d5862"/><circle cx="75.2" cy="76.9" r="0.8" fill="#dfe6ea"/><circle cx="7.7" cy="43.2" r="1.2" fill="#dfe6ea"/><circle cx="13.3" cy="61.8" r="1.2" fill="#aeb8c0"/><circle cx="14.3" cy="61.8" r="0.4" fill="#aeb8c0"/><circle cx="47.9" cy="35.2" r="0.8" fill="#dfe6ea"/><circle cx="22.9" cy="77.6" r="0.8" fill="#4d5862"/><circle cx="86.6" cy="75.8" r="0.4" fill="#dfe6ea"/><circle cx="71.9" cy="59.1" r="0.7" fill="#dfe6ea"/><circle cx="21.4" cy="47.3" r="0.8" fill="#dfe6ea"/><circle cx="52.7" cy="67.0" r="0.7" fill="#4d5862"/><circle cx="79.4" cy="54.9" r="1.1" fill="#dfe6ea"/><circle cx="76.4" cy="48.7" r="0.8" fill="#4d5862"/><circle cx="35.7" cy="69.3" r="0.8" fill="#4d5862"/><circle cx="89.5" cy="27.3" r="0.5" fill="#aeb8c0"/><circle cx="78.2" cy="30.0" r="1.0" fill="#aeb8c0"/><circle cx="33.5" cy="57.4" r="1.0" fill="#aeb8c0"/><circle cx="83.2" cy="72.1" r="0.8" fill="#dfe6ea"/><circle cx="93.7" cy="25.1" r="0.6" fill="#aeb8c0"/><circle cx="35.1" cy="41.8" r="0.8" fill="#7f8a94"/><circle cx="26.4" cy="27.6" r="0.5" fill="#7f8a94"/><circle cx="57.1" cy="25.6" r="0.6" fill="#7f8a94"/><circle cx="24.6" cy="55.4" r="0.7" fill="#dfe6ea"/><circle cx="75.2" cy="53.9" r="0.6" fill="#7f8a94"/><circle cx="60.4" cy="27.2" r="1.0" fill="#aeb8c0"/><circle cx="81.4" cy="30.5" r="1.2" fill="#dfe6ea"/><circle cx="12.6" cy="50.1" r="0.6" fill="#aeb8c0"/><circle cx="62.1" cy="66.1" r="1.1" fill="#dfe6ea"/><circle cx="40.9" cy="60.7" r="1.0" fill="#dfe6ea"/><circle cx="79.3" cy="57.1" r="1.1" fill="#7f8a94"/><circle cx="15.4" cy="25.4" r="0.6" fill="#aeb8c0"/><circle cx="35.4" cy="35.4" r="1.0" fill="#dfe6ea"/><circle cx="42.6" cy="60.0" r="0.9" fill="#7f8a94"/><circle cx="27.2" cy="70.3" r="0.4" fill="#7f8a94"/><circle cx="43.3" cy="29.5" r="0.6" fill="#7f8a94"/><circle cx="71.7" cy="36.2" r="0.6" fill="#4d5862"/><circle cx="87.9" cy="53.9" r="0.7" fill="#7f8a94"/><circle cx="85.4" cy="76.3" r="0.8" fill="#4d5862"/><circle cx="46.8" cy="56.7" r="0.4" fill="#aeb8c0"/><circle cx="21.4" cy="30.2" r="1.0" fill="#dfe6ea"/><circle cx="49.8" cy="28.3" r="0.8" fill="#7f8a94"/><circle cx="71.3" cy="39.9" r="0.7" fill="#dfe6ea"/><circle cx="46.7" cy="35.6" r="1.0" fill="#7f8a94"/><circle cx="14.2" cy="41.2" r="0.7" fill="#aeb8c0"/><circle cx="23.3" cy="51.3" r="1.0" fill="#dfe6ea"/><circle cx="91.9" cy="77.9" r="1.1" fill="#dfe6ea"/><circle cx="88.9" cy="48.3" r="1.2" fill="#4d5862"/><circle cx="51.8" cy="54.3" r="0.7" fill="#dfe6ea"/><circle cx="30.4" cy="50.0" r="1.1" fill="#dfe6ea"/><circle cx="71.5" cy="75.2" r="0.8" fill="#aeb8c0"/><circle cx="16.7" cy="53.7" r="0.8" fill="#7f8a94"/><circle cx="89.6" cy="25.1" r="1.2" fill="#4d5862"/><circle cx="36.6" cy="77.1" r="0.7" fill="#aeb8c0"/><circle cx="48.6" cy="37.9" r="0.6" fill="#dfe6ea"/><circle cx="79.4" cy="57.6" r="1.0" fill="#4d5862"/><circle cx="32.7" cy="38.4" r="1.0" fill="#4d5862"/><circle cx="69.3" cy="43.3" r="0.4" fill="#aeb8c0"/><circle cx="60.8" cy="61.5" r="1.1" fill="#7f8a94"/><circle cx="89.9" cy="65.2" r="1.1" fill="#4d5862"/><circle cx="50.3" cy="69.9" r="0.8" fill="#dfe6ea"/><circle cx="6.5" cy="27.4" r="0.8" fill="#aeb8c0"/><circle cx="84.8" cy="73.9" r="0.8" fill="#4d5862"/><circle cx="38.0" cy="59.1" r="0.6" fill="#aeb8c0"/><circle cx="65.9" cy="78.6" r="0.8" fill="#4d5862"/><circle cx="73.9" cy="49.0" r="0.6" fill="#dfe6ea"/><circle cx="45.3" cy="76.8" r="0.5" fill="#dfe6ea"/><circle cx="17.4" cy="27.0" r="0.8" fill="#7f8a94"/><circle cx="78.7" cy="75.3" r="0.9" fill="#aeb8c0"/><circle cx="33.2" cy="57.3" r="0.5" fill="#7f8a94"/><circle cx="29.9" cy="63.3" r="1.1" fill="#aeb8c0"/><circle cx="43.7" cy="29.1" r="0.4" fill="#4d5862"/><circle cx="84.7" cy="76.9" r="0.9" fill="#7f8a94"/><circle cx="32.7" cy="43.7" r="0.9" fill="#4d5862"/><circle cx="33.1" cy="39.6" r="1.2" fill="#dfe6ea"/><circle cx="33.2" cy="46.2" r="0.6" fill="#7f8a94"/><circle cx="42.1" cy="47.3" r="1.1" fill="#4d5862"/><circle cx="25.4" cy="35.8" r="0.5" fill="#aeb8c0"/><circle cx="71.1" cy="70.3" r="0.9" fill="#aeb8c0"/><circle cx="88.8" cy="77.6" r="1.0" fill="#4d5862"/><circle cx="28.8" cy="51.1" r="0.6" fill="#aeb8c0"/><circle cx="20.5" cy="51.3" r="0.5" fill="#7f8a94"/><circle cx="85.6" cy="34.6" r="1.2" fill="#4d5862"/><circle cx="62.6" cy="32.7" r="0.4" fill="#7f8a94"/><circle cx="32.7" cy="60.0" r="0.5" fill="#7f8a94"/><circle cx="9.3" cy="76.9" r="0.8" fill="#4d5862"/><circle cx="74.3" cy="48.4" r="0.5" fill="#aeb8c0"/><circle cx="30.0" cy="32.1" r="0.5" fill="#7f8a94"/><circle cx="39.1" cy="75.6" r="0.9" fill="#7f8a94"/><circle cx="5.7" cy="45.0" r="0.5" fill="#4d5862"/><circle cx="26.9" cy="44.1" r="1.2" fill="#4d5862"/><circle cx="14.2" cy="70.7" r="0.8" fill="#dfe6ea"/><circle cx="52.2" cy="71.1" r="0.8" fill="#4d5862"/><circle cx="46.3" cy="54.1" r="0.8" fill="#4d5862"/><circle cx="79.1" cy="35.8" r="0.9" fill="#7f8a94"/><circle cx="31.8" cy="71.4" r="1.2" fill="#dfe6ea"/><circle cx="28.7" cy="35.9" r="0.4" fill="#aeb8c0"/><circle cx="41.4" cy="72.1" r="0.5" fill="#aeb8c0"/><circle cx="19.1" cy="31.6" r="0.7" fill="#dfe6ea"/><circle cx="51.7" cy="66.4" r="0.5" fill="#4d5862"/><circle cx="34.0" cy="56.9" r="0.6" fill="#4d5862"/><circle cx="50.1" cy="45.2" r="0.7" fill="#dfe6ea"/><circle cx="67.5" cy="66.6" r="1.0" fill="#dfe6ea"/><circle cx="81.7" cy="70.1" r="0.6" fill="#dfe6ea"/><circle cx="29.0" cy="31.7" r="0.8" fill="#dfe6ea"/><circle cx="69.9" cy="38.4" r="0.7" fill="#dfe6ea"/><circle cx="45.3" cy="50.8" r="0.8" fill="#7f8a94"/><circle cx="92.8" cy="53.5" r="0.8" fill="#aeb8c0"/><circle cx="11.2" cy="48.0" r="1.1" fill="#dfe6ea"/><circle cx="10.3" cy="71.1" r="0.7" fill="#aeb8c0"/><circle cx="37.6" cy="36.6" r="0.8" fill="#aeb8c0"/><circle cx="43.4" cy="71.8" r="1.0" fill="#dfe6ea"/><circle cx="6.1" cy="45.1" r="0.7" fill="#4d5862"/><circle cx="38.2" cy="60.2" r="1.1" fill="#4d5862"/><circle cx="18.0" cy="36.9" r="0.7" fill="#aeb8c0"/><circle cx="17.4" cy="29.4" r="0.7" fill="#dfe6ea"/><circle cx="22.5" cy="26.5" r="1.0" fill="#dfe6ea"/><circle cx="52.6" cy="64.8" r="1.1" fill="#7f8a94"/><circle cx="44.3" cy="61.9" r="0.5" fill="#4d5862"/><circle cx="25.0" cy="32.5" r="0.6" fill="#7f8a94"/><circle cx="15.4" cy="34.4" r="1.1" fill="#4d5862"/><circle cx="7.5" cy="44.0" r="0.4" fill="#7f8a94"/><circle cx="47.1" cy="32.6" r="0.6" fill="#4d5862"/><circle cx="57.2" cy="76.3" r="0.6" fill="#dfe6ea"/><circle cx="13.6" cy="77.9" r="1.0" fill="#aeb8c0"/><circle cx="10.7" cy="72.4" r="1.0" fill="#dfe6ea"/><circle cx="10.9" cy="25.5" r="0.8" fill="#4d5862"/><circle cx="61.2" cy="30.1" r="0.9" fill="#4d5862"/><circle cx="83.5" cy="37.2" r="0.7" fill="#4d5862"/><circle cx="90.3" cy="27.8" r="0.8" fill="#7f8a94"/><circle cx="56.1" cy="29.6" r="0.6" fill="#4d5862"/><circle cx="78.4" cy="74.6" r="0.7" fill="#dfe6ea"/><circle cx="92.4" cy="60.7" r="0.8" fill="#7f8a94"/><circle cx="56.0" cy="43.5" r="0.9" fill="#dfe6ea"/><circle cx="60.2" cy="44.2" r="1.0" fill="#7f8a94"/><circle cx="44.8" cy="64.0" r="1.1" fill="#7f8a94"/><circle cx="48.9" cy="71.1" r="0.5" fill="#aeb8c0"/><circle cx="88.5" cy="31.5" r="1.1" fill="#4d5862"/><circle cx="80.0" cy="42.0" r="1.0" fill="#dfe6ea"/><circle cx="49.4" cy="45.8" r="1.1" fill="#aeb8c0"/><circle cx="26.1" cy="44.8" r="0.6" fill="#dfe6ea"/><circle cx="27.3" cy="39.2" r="1.0" fill="#dfe6ea"/><circle cx="70.2" cy="36.2" r="0.6" fill="#7f8a94"/><circle cx="55.3" cy="38.3" r="1.0" fill="#7f8a94"/><circle cx="77.2" cy="44.7" r="0.6" fill="#4d5862"/><circle cx="58.3" cy="47.9" r="0.5" fill="#dfe6ea"/><circle cx="44.4" cy="28.0" r="1.0" fill="#4d5862"/><circle cx="48.6" cy="56.3" r="0.6" fill="#4d5862"/><circle cx="66.0" cy="37.0" r="1.1" fill="#4d5862"/><circle cx="35.8" cy="78.8" r="0.8" fill="#7f8a94"/><circle cx="15.2" cy="47.6" r="1.1" fill="#7f8a94"/><circle cx="56.9" cy="30.8" r="0.8" fill="#dfe6ea"/><circle cx="47.5" cy="54.1" r="1.1" fill="#4d5862"/><circle cx="38.4" cy="27.3" r="0.7" fill="#7f8a94"/><circle cx="60.5" cy="62.9" r="1.2" fill="#dfe6ea"/><circle cx="57.0" cy="61.6" r="0.6" fill="#dfe6ea"/><circle cx="93.0" cy="70.1" r="1.0" fill="#dfe6ea"/><circle cx="87.2" cy="47.8" r="0.8" fill="#dfe6ea"/><circle cx="42.6" cy="45.0" r="0.5" fill="#dfe6ea"/><circle cx="67.1" cy="55.4" r="0.7" fill="#aeb8c0"/><circle cx="33.8" cy="33.8" r="1.1" fill="#4d5862"/><circle cx="20.4" cy="46.3" r="0.6" fill="#4d5862"/><circle cx="54.2" cy="44.7" r="1.0" fill="#4d5862"/><circle cx="67.5" cy="34.0" r="0.9" fill="#aeb8c0"/><circle cx="14.0" cy="54.0" r="1.1" fill="#dfe6ea"/><circle cx="40.4" cy="28.6" r="0.6" fill="#dfe6ea"/><circle cx="25.5" cy="39.1" r="0.6" fill="#aeb8c0"/><circle cx="47.4" cy="48.4" r="0.6" fill="#7f8a94"/><circle cx="28.6" cy="67.1" r="1.2" fill="#7f8a94"/><circle cx="27.0" cy="39.0" r="0.7" fill="#dfe6ea"/><circle cx="85.4" cy="30.3" r="1.0" fill="#aeb8c0"/><circle cx="25.1" cy="49.7" r="1.2" fill="#dfe6ea"/><circle cx="78.7" cy="32.7" r="0.4" fill="#4d5862"/><circle cx="29.0" cy="52.5" r="0.7" fill="#4d5862"/><circle cx="71.3" cy="52.2" r="0.9" fill="#4d5862"/><circle cx="92.0" cy="48.2" r="0.6" fill="#dfe6ea"/><circle cx="57.1" cy="46.0" r="0.4" fill="#7f8a94"/><circle cx="43.4" cy="25.1" r="1.0" fill="#7f8a94"/><circle cx="49.9" cy="76.5" r="1.1" fill="#dfe6ea"/><circle cx="27.9" cy="58.9" r="0.9" fill="#dfe6ea"/><circle cx="23.0" cy="33.6" r="1.2" fill="#aeb8c0"/><circle cx="48.1" cy="64.9" r="0.5" fill="#dfe6ea"/><circle cx="64.5" cy="57.6" r="0.5" fill="#7f8a94"/><circle cx="12.7" cy="29.3" r="0.9" fill="#aeb8c0"/><circle cx="5.6" cy="29.5" r="1.0" fill="#4d5862"/><circle cx="68.0" cy="54.9" r="0.9" fill="#4d5862"/><circle cx="28.4" cy="62.9" r="0.4" fill="#dfe6ea"/><circle cx="65.7" cy="47.4" r="0.4" fill="#dfe6ea"/><circle cx="51.1" cy="42.7" r="1.2" fill="#aeb8c0"/><circle cx="8.9" cy="36.4" r="0.4" fill="#4d5862"/><circle cx="88.3" cy="63.9" r="0.9" fill="#4d5862"/><circle cx="45.3" cy="68.2" r="0.7" fill="#7f8a94"/><circle cx="19.0" cy="46.2" r="0.7" fill="#aeb8c0"/><circle cx="53.6" cy="57.3" r="0.6" fill="#aeb8c0"/><circle cx="41.1" cy="56.8" r="0.6" fill="#4d5862"/><circle cx="55.6" cy="39.3" r="1.0" fill="#4d5862"/><circle cx="63.9" cy="64.7" r="0.8" fill="#4d5862"/><circle cx="61.7" cy="68.2" r="0.5" fill="#4d5862"/><circle cx="49.5" cy="30.4" r="1.1" fill="#7f8a94"/><circle cx="44.0" cy="31.8" r="1.2" fill="#7f8a94"/><circle cx="25.1" cy="53.4" r="0.6" fill="#aeb8c0"/><circle cx="49.5" cy="50.9" r="0.6" fill="#4d5862"/><circle cx="6.8" cy="26.2" r="0.9" fill="#aeb8c0"/><circle cx="68.1" cy="71.9" r="1.1" fill="#aeb8c0"/><circle cx="35.7" cy="41.0" r="1.1" fill="#4d5862"/><circle cx="31.7" cy="41.5" r="0.5" fill="#aeb8c0"/><circle cx="41.1" cy="60.1" r="0.5" fill="#7f8a94"/><circle cx="26.1" cy="33.6" r="0.7" fill="#7f8a94"/><circle cx="61.1" cy="29.5" r="0.9" fill="#aeb8c0"/><circle cx="49.1" cy="44.6" r="0.8" fill="#aeb8c0"/><circle cx="42.5" cy="63.4" r="0.8" fill="#4d5862"/><circle cx="43.6" cy="43.5" r="1.2" fill="#dfe6ea"/><circle cx="32.2" cy="64.9" r="0.6" fill="#4d5862"/><circle cx="71.6" cy="36.1" r="0.5" fill="#dfe6ea"/><circle cx="71.2" cy="76.7" r="0.8" fill="#7f8a94"/><circle cx="69.1" cy="57.4" r="0.9" fill="#aeb8c0"/><circle cx="59.4" cy="38.0" r="0.5" fill="#aeb8c0"/><circle cx="63.2" cy="74.3" r="0.8" fill="#4d5862"/><circle cx="83.6" cy="55.5" r="0.7" fill="#4d5862"/><circle cx="77.9" cy="44.7" r="1.1" fill="#4d5862"/><circle cx="37.4" cy="64.2" r="0.6" fill="#7f8a94"/><circle cx="17.3" cy="72.5" r="1.0" fill="#aeb8c0"/><circle cx="62.1" cy="64.3" r="0.5" fill="#4d5862"/><circle cx="47.6" cy="45.4" r="0.8" fill="#4d5862"/><path d="M30 60Q36 52 46 56L50 66L44 70L34 68Z" fill="#d8e0e4" opacity="0.4"/><path d="M72 30Q84 34 86 56Q80 70 70 66Q76 50 68 38Z" fill="#c8d2d8" opacity="0.3"/><path d="M14 30Q24 26 34 36Q26 44 16 40Z" fill="#b8c4cc" opacity="0.25"/><rect x="0" y="84" width="99" height="9" fill="#090909"/></svg></div>
<div class="btn" style="left:1590px;top:679px;width:98px;height:32px;background:#2ed6c9;padding-top:8px"><svg style="vertical-align:0px" width="14" height="10" viewBox="0 0 14 10"><path d="M1 5 Q7 -1.5 13 5 Q7 11.5 1 5Z" fill="none" stroke="#fff" stroke-width="1.2"/><circle cx="7" cy="5" r="1.8" fill="none" stroke="#fff" stroke-width="1.2"/></svg>查看</div>
<div class="btn" style="left:1698px;top:679px;width:98px;height:32px;background:#476dd6;padding-top:8px"><svg style="vertical-align:-1px" width="13" height="13" viewBox="0 0 13 13"><path d="M2 10 L8.5 3.5 L10 5 L3.5 11.5 Z M2 12H11" fill="none" stroke="#fff" stroke-width="1.3"/></svg>修改</div>
<div class="btn" style="left:1590px;top:725px;width:126px;height:32px;background:#2ed6c9;padding-top:8px"><svg style="vertical-align:0px" width="14" height="10" viewBox="0 0 14 10"><path d="M1 5 Q7 -1.5 13 5 Q7 11.5 1 5Z" fill="none" stroke="#fff" stroke-width="1.2"/><circle cx="7" cy="5" r="1.8" fill="none" stroke="#fff" stroke-width="1.2"/></svg>查看评论</div>
<div class="btn" style="left:1726px;top:721px;width:126px;height:40px;background:#fe2b86;padding-top:12px"><svg style="margin-left:2px;margin-right:5px" width="14" height="14" viewBox="0 0 14 14"><circle cx="7" cy="7" r="5.8" fill="none" stroke="#fff" stroke-width="1.3"/><path d="M7 2.5V11.5M7 8L4.6 9.6" fill="none" stroke="#fff" stroke-width="1.1"/></svg>出价记录</div>
<div class="btn" style="left:1590px;top:771px;width:98px;height:32px;background:#fd3a2c;padding-top:8px"><svg width="13" height="13" viewBox="0 0 13 13"><path d="M1 4Q6.5 0.5 12 4Z" fill="none" stroke="#fff" stroke-width="1.1"/><path d="M2.5 5V12H10.5V5M5.2 6.5V10.5M7.8 6.5V10.5" fill="none" stroke="#fff" stroke-width="1.1"/></svg>删除</div>
<div class="cb" style="top:897px;border-color:#ececee"></div>
<div class="td fd n" style="left:311px;top:892px">4</div>
<div class="td fd n" style="left:361px;top:880px">55555555<br>55</div>
<div class="td fd" style="left:455px;top:880px">物品名称<br>5</div>
<div class="td fd" style="left:540px;top:880px">物品分类<br>5</div>
<div class="td fd" style="left:825px;top:880px">物品年份<br>5</div>
<div class="td fd" style="left:910px;top:880px">物品工艺<br>5</div>
<div class="td fd n" style="left:995px;top:892px">5</div>
<div class="td fd n" style="left:1080px;top:892px">0</div>
<div class="td fd n" style="left:1165px;top:892px">99.9</div>
<div class="td fd n" style="left:1250px;top:892px">5</div>
<div class="td fd n" style="left:1335px;top:892px">99.9</div>
<div class="td fd n" style="left:1420px;top:892px">5</div>
<div class="td fd n" style="left:1505px;top:892px">199</div>
<div class="a" style="left:625px;top:852px;width:100px;height:100px;overflow:hidden"><svg width="100" height="96" viewBox="0 0 100 96"><defs><radialGradient id="g4" cx="0.78" cy="0.4" r="0.75"><stop offset="0" stop-color="#a8b4c4"/><stop offset="0.35" stop-color="#7a8ca0"/><stop offset="0.75" stop-color="#3e5a74"/><stop offset="1" stop-color="#2c4660"/></radialGradient></defs><rect width="100" height="96" fill="url(#g4)"/><path d="M0 24Q30 10 72 1" fill="none" stroke="#8a8060" stroke-width="3.5"/><path d="M0 24Q30 10 72 1" fill="none" stroke="#d8d0b0" stroke-width="1" stroke-dasharray="1.5 1.5"/><path d="M76 0Q84 15 89 40" fill="none" stroke="#6f6a50" stroke-width="3"/><path d="M0 32L2 48" stroke="#222" stroke-width="2"/><circle cx="4" cy="52" r="8" fill="#2a2418"/><circle cx="2.3" cy="46.5" r="0.4" fill="#e8dcb0"/><circle cx="4.8" cy="48.6" r="1.1" fill="#c8b070"/><circle cx="-0.4" cy="52.6" r="0.6" fill="#c8b070"/><circle cx="9.2" cy="48.2" r="1.1" fill="#c8b070"/><circle cx="9.3" cy="56.9" r="1.0" fill="#c8b070"/><circle cx="-1.4" cy="48.6" r="1.0" fill="#e8dcb0"/><circle cx="-2.6" cy="53.7" r="0.9" fill="#8a7040"/><circle cx="-0.0" cy="48.0" r="0.6" fill="#8a7040"/><circle cx="0.7" cy="55.3" r="0.6" fill="#8a7040"/><circle cx="-0.9" cy="50.8" r="0.6" fill="#e8dcb0"/><circle cx="-1.4" cy="48.9" r="1.0" fill="#c8b070"/><circle cx="-2.7" cy="51.4" r="1.1" fill="#8a7040"/><circle cx="4.6" cy="51.5" r="0.6" fill="#8a7040"/><circle cx="-0.9" cy="50.6" r="0.5" fill="#8a7040"/><circle cx="3.1" cy="46.9" r="0.7" fill="#8a7040"/><circle cx="1.1" cy="52.9" r="1.0" fill="#c8b070"/><circle cx="9.4" cy="55.3" r="0.6" fill="#8a7040"/><circle cx="5.8" cy="47.8" r="0.6" fill="#c8b070"/><circle cx="1.7" cy="45.3" r="1.1" fill="#e8dcb0"/><circle cx="2.6" cy="59.1" r="0.8" fill="#c8b070"/><circle cx="0.7" cy="47.1" r="0.7" fill="#c8b070"/><circle cx="0.0" cy="53.6" r="0.5" fill="#8a7040"/><circle cx="-1.3" cy="56.5" r="0.7" fill="#e8dcb0"/><circle cx="5.1" cy="51.0" r="0.5" fill="#c8b070"/><circle cx="7.8" cy="53.5" r="1.1" fill="#8a7040"/><circle cx="-3.3" cy="51.9" r="0.6" fill="#c8b070"/><circle cx="-2.0" cy="52.5" r="0.9" fill="#e8dcb0"/><circle cx="6.4" cy="47.2" r="0.5" fill="#e8dcb0"/><circle cx="2.7" cy="48.0" r="1.0" fill="#c8b070"/><circle cx="0.1" cy="47.9" r="0.5" fill="#c8b070"/><circle cx="27" cy="57" r="11" fill="#2a2418"/><circle cx="25.2" cy="51.8" r="0.6" fill="#e8dcb0"/><circle cx="24.9" cy="65.8" r="0.9" fill="#8a7040"/><circle cx="32.4" cy="56.9" r="0.5" fill="#c8b070"/><circle cx="36.5" cy="58.6" r="1.1" fill="#c8b070"/><circle cx="23.4" cy="60.5" r="1.0" fill="#8a7040"/><circle cx="22.9" cy="55.2" r="0.6" fill="#8a7040"/><circle cx="33.6" cy="53.4" r="0.7" fill="#e8dcb0"/><circle cx="19.7" cy="60.0" r="0.8" fill="#8a7040"/><circle cx="24.9" cy="54.6" r="1.0" fill="#c8b070"/><circle cx="33.8" cy="63.2" r="1.0" fill="#8a7040"/><circle cx="19.6" cy="59.4" r="1.0" fill="#8a7040"/><circle cx="33.0" cy="56.4" r="0.8" fill="#c8b070"/><circle cx="18.5" cy="58.3" r="0.6" fill="#c8b070"/><circle cx="22.5" cy="53.6" r="0.5" fill="#8a7040"/><circle cx="26.0" cy="50.5" r="1.1" fill="#e8dcb0"/><circle cx="21.1" cy="56.7" r="1.1" fill="#c8b070"/><circle cx="33.6" cy="54.0" r="1.1" fill="#e8dcb0"/><circle cx="34.9" cy="63.1" r="0.4" fill="#c8b070"/><circle cx="30.0" cy="66.5" r="0.7" fill="#c8b070"/><circle cx="33.6" cy="49.7" r="1.0" fill="#c8b070"/><circle cx="31.5" cy="53.2" r="1.0" fill="#e8dcb0"/><circle cx="27.9" cy="65.9" r="0.9" fill="#c8b070"/><circle cx="30.3" cy="48.7" r="0.5" fill="#8a7040"/><circle cx="29.2" cy="57.6" r="0.8" fill="#e8dcb0"/><circle cx="34.6" cy="53.8" r="0.9" fill="#8a7040"/><circle cx="36.0" cy="58.0" r="1.0" fill="#8a7040"/><circle cx="22.7" cy="65.1" r="1.0" fill="#8a7040"/><circle cx="29.6" cy="54.6" r="0.6" fill="#8a7040"/><circle cx="24.0" cy="60.6" r="0.5" fill="#c8b070"/><circle cx="29.3" cy="60.9" r="0.8" fill="#e8dcb0"/><circle cx="35.8" cy="54.2" r="0.8" fill="#e8dcb0"/><circle cx="30.8" cy="65.4" r="0.5" fill="#8a7040"/><circle cx="30.4" cy="53.2" r="0.6" fill="#c8b070"/><circle cx="29.3" cy="57.5" r="0.9" fill="#c8b070"/><circle cx="33.6" cy="63.8" r="1.1" fill="#c8b070"/><circle cx="26.5" cy="65.5" r="0.6" fill="#8a7040"/><circle cx="57" cy="53" r="10" fill="#2a2418"/><circle cx="55.1" cy="55.0" r="1.0" fill="#8a7040"/><circle cx="51.4" cy="50.4" r="0.9" fill="#8a7040"/><circle cx="65.0" cy="51.0" r="0.7" fill="#e8dcb0"/><circle cx="52.7" cy="51.2" r="0.4" fill="#c8b070"/><circle cx="64.9" cy="52.2" r="0.8" fill="#e8dcb0"/><circle cx="55.1" cy="50.8" r="0.4" fill="#8a7040"/><circle cx="59.1" cy="49.2" r="0.5" fill="#e8dcb0"/><circle cx="56.7" cy="55.8" r="0.7" fill="#8a7040"/><circle cx="62.6" cy="46.0" r="0.6" fill="#e8dcb0"/><circle cx="55.0" cy="54.6" r="0.8" fill="#8a7040"/><circle cx="57.5" cy="46.2" r="0.5" fill="#c8b070"/><circle cx="52.4" cy="60.6" r="0.9" fill="#8a7040"/><circle cx="64.8" cy="57.0" r="0.9" fill="#8a7040"/><circle cx="55.3" cy="45.6" r="0.9" fill="#c8b070"/><circle cx="58.2" cy="56.9" r="0.9" fill="#8a7040"/><circle cx="50.1" cy="51.2" r="0.6" fill="#e8dcb0"/><circle cx="56.7" cy="44.4" r="0.5" fill="#e8dcb0"/><circle cx="57.3" cy="53.7" r="0.6" fill="#e8dcb0"/><circle cx="53.6" cy="50.7" r="0.7" fill="#c8b070"/><circle cx="52.6" cy="56.5" r="0.6" fill="#c8b070"/><circle cx="65.2" cy="53.6" r="1.0" fill="#e8dcb0"/><circle cx="54.6" cy="60.0" r="1.0" fill="#8a7040"/><circle cx="50.8" cy="52.5" r="1.0" fill="#e8dcb0"/><circle cx="53.1" cy="55.9" r="1.0" fill="#8a7040"/><circle cx="61.8" cy="59.4" r="0.5" fill="#8a7040"/><circle cx="64.2" cy="56.2" r="0.6" fill="#e8dcb0"/><circle cx="59.5" cy="49.8" r="1.0" fill="#c8b070"/><circle cx="60.2" cy="57.0" r="0.8" fill="#8a7040"/><circle cx="56.5" cy="62.1" r="1.0" fill="#c8b070"/><circle cx="61.3" cy="53.0" r="0.8" fill="#8a7040"/><circle cx="60.5" cy="49.7" r="0.8" fill="#c8b070"/><circle cx="60.9" cy="45.3" r="1.1" fill="#8a7040"/><circle cx="51.5" cy="48.5" r="1.1" fill="#8a7040"/><circle cx="61.0" cy="47.3" r="0.6" fill="#8a7040"/><circle cx="80" cy="43" r="9" fill="#2a2418"/><circle cx="84.5" cy="48.7" r="0.6" fill="#e8dcb0"/><circle cx="82.4" cy="41.2" r="0.5" fill="#e8dcb0"/><circle cx="86.5" cy="39.4" r="0.9" fill="#c8b070"/><circle cx="83.7" cy="41.9" r="0.5" fill="#c8b070"/><circle cx="79.6" cy="41.9" r="1.1" fill="#e8dcb0"/><circle cx="84.6" cy="41.3" r="0.8" fill="#e8dcb0"/><circle cx="76.8" cy="45.2" r="0.6" fill="#8a7040"/><circle cx="72.6" cy="41.3" r="0.8" fill="#8a7040"/><circle cx="87.0" cy="43.0" r="0.5" fill="#e8dcb0"/><circle cx="80.3" cy="35.7" r="1.0" fill="#e8dcb0"/><circle cx="76.3" cy="44.2" r="0.9" fill="#8a7040"/><circle cx="74.2" cy="46.9" r="0.4" fill="#c8b070"/><circle cx="83.2" cy="38.7" r="0.8" fill="#8a7040"/><circle cx="81.9" cy="40.6" r="1.1" fill="#c8b070"/><circle cx="83.1" cy="38.7" r="1.0" fill="#8a7040"/><circle cx="79.6" cy="43.8" r="0.8" fill="#e8dcb0"/><circle cx="78.7" cy="41.3" r="0.4" fill="#c8b070"/><circle cx="74.3" cy="40.4" r="0.6" fill="#e8dcb0"/><circle cx="81.3" cy="37.5" r="0.8" fill="#e8dcb0"/><circle cx="77.9" cy="43.6" r="0.5" fill="#c8b070"/><circle cx="74.4" cy="40.3" r="1.1" fill="#c8b070"/><circle cx="76.3" cy="46.4" r="0.6" fill="#8a7040"/><circle cx="80.0" cy="34.7" r="0.6" fill="#8a7040"/><circle cx="85.4" cy="36.9" r="1.1" fill="#8a7040"/><circle cx="79.3" cy="40.4" r="0.7" fill="#c8b070"/><circle cx="79.1" cy="47.4" r="1.0" fill="#8a7040"/><circle cx="78.5" cy="36.1" r="0.6" fill="#8a7040"/><circle cx="73.9" cy="46.2" r="0.4" fill="#8a7040"/><circle cx="12" cy="57" r="5" fill="#f0eeea"/><circle cx="43" cy="57" r="5" fill="#f0eeea"/><circle cx="69" cy="48" r="4.5" fill="#f0eeea"/><circle cx="88" cy="41" r="4" fill="#f0eeea"/><path d="M15 72Q40 76 75 60" fill="none" stroke="#1e3246" stroke-width="6" opacity="0.45"/></svg></div>
<div class="btn" style="left:1590px;top:838px;width:98px;height:32px;background:#2ed6c9;padding-top:8px"><svg style="vertical-align:0px" width="14" height="10" viewBox="0 0 14 10"><path d="M1 5 Q7 -1.5 13 5 Q7 11.5 1 5Z" fill="none" stroke="#fff" stroke-width="1.2"/><circle cx="7" cy="5" r="1.8" fill="none" stroke="#fff" stroke-width="1.2"/></svg>查看</div>
<div class="btn" style="left:1698px;top:838px;width:98px;height:32px;background:#476dd6;padding-top:8px"><svg style="vertical-align:-1px" width="13" height="13" viewBox="0 0 13 13"><path d="M2 10 L8.5 3.5 L10 5 L3.5 11.5 Z M2 12H11" fill="none" stroke="#fff" stroke-width="1.3"/></svg>修改</div>
<div class="btn" style="left:1590px;top:884px;width:126px;height:32px;background:#2ed6c9;padding-top:8px"><svg style="vertical-align:0px" width="14" height="10" viewBox="0 0 14 10"><path d="M1 5 Q7 -1.5 13 5 Q7 11.5 1 5Z" fill="none" stroke="#fff" stroke-width="1.2"/><circle cx="7" cy="5" r="1.8" fill="none" stroke="#fff" stroke-width="1.2"/></svg>查看评论</div>
<div class="btn" style="left:1726px;top:880px;width:126px;height:40px;background:#fe2b86;padding-top:12px"><svg style="margin-left:2px;margin-right:5px" width="14" height="14" viewBox="0 0 14 14"><circle cx="7" cy="7" r="5.8" fill="none" stroke="#fff" stroke-width="1.3"/><path d="M7 2.5V11.5M7 8L4.6 9.6" fill="none" stroke="#fff" stroke-width="1.1"/></svg>出价记录</div>
<div class="btn" style="left:1590px;top:930px;width:98px;height:32px;background:#fd3a2c;padding-top:8px"><svg width="13" height="13" viewBox="0 0 13 13"><path d="M1 4Q6.5 0.5 12 4Z" fill="none" stroke="#fff" stroke-width="1.1"/><path d="M2.5 5V12H10.5V5M5.2 6.5V10.5M7.8 6.5V10.5" fill="none" stroke="#fff" stroke-width="1.1"/></svg>删除</div>
<div class="a" style="left:880px;top:474px;font-family:'Liberation Mono',monospace;font-size:16.6px;color:#d0112b;line-height:20px;z-index:4">www.bishebang.site</div>
<div class="a" style="left:770px;top:18px;width:380px;height:46px;background:#f0f9eb;border:1px solid #e1f3d8;border-radius:4px;z-index:10">
<svg class="a" style="left:21px;top:15px" width="15" height="15" viewBox="0 0 15 15"><circle cx="7.5" cy="7.5" r="7.5" fill="#67c23a"/><path d="M4 7.5L6.5 10L11 5" fill="none" stroke="#fff" stroke-width="1.6"/></svg>
<div class="a" style="left:46px;top:15px;font-size:14px;color:#6cb548;line-height:16px">操作成功</div></div>
</body></html>
